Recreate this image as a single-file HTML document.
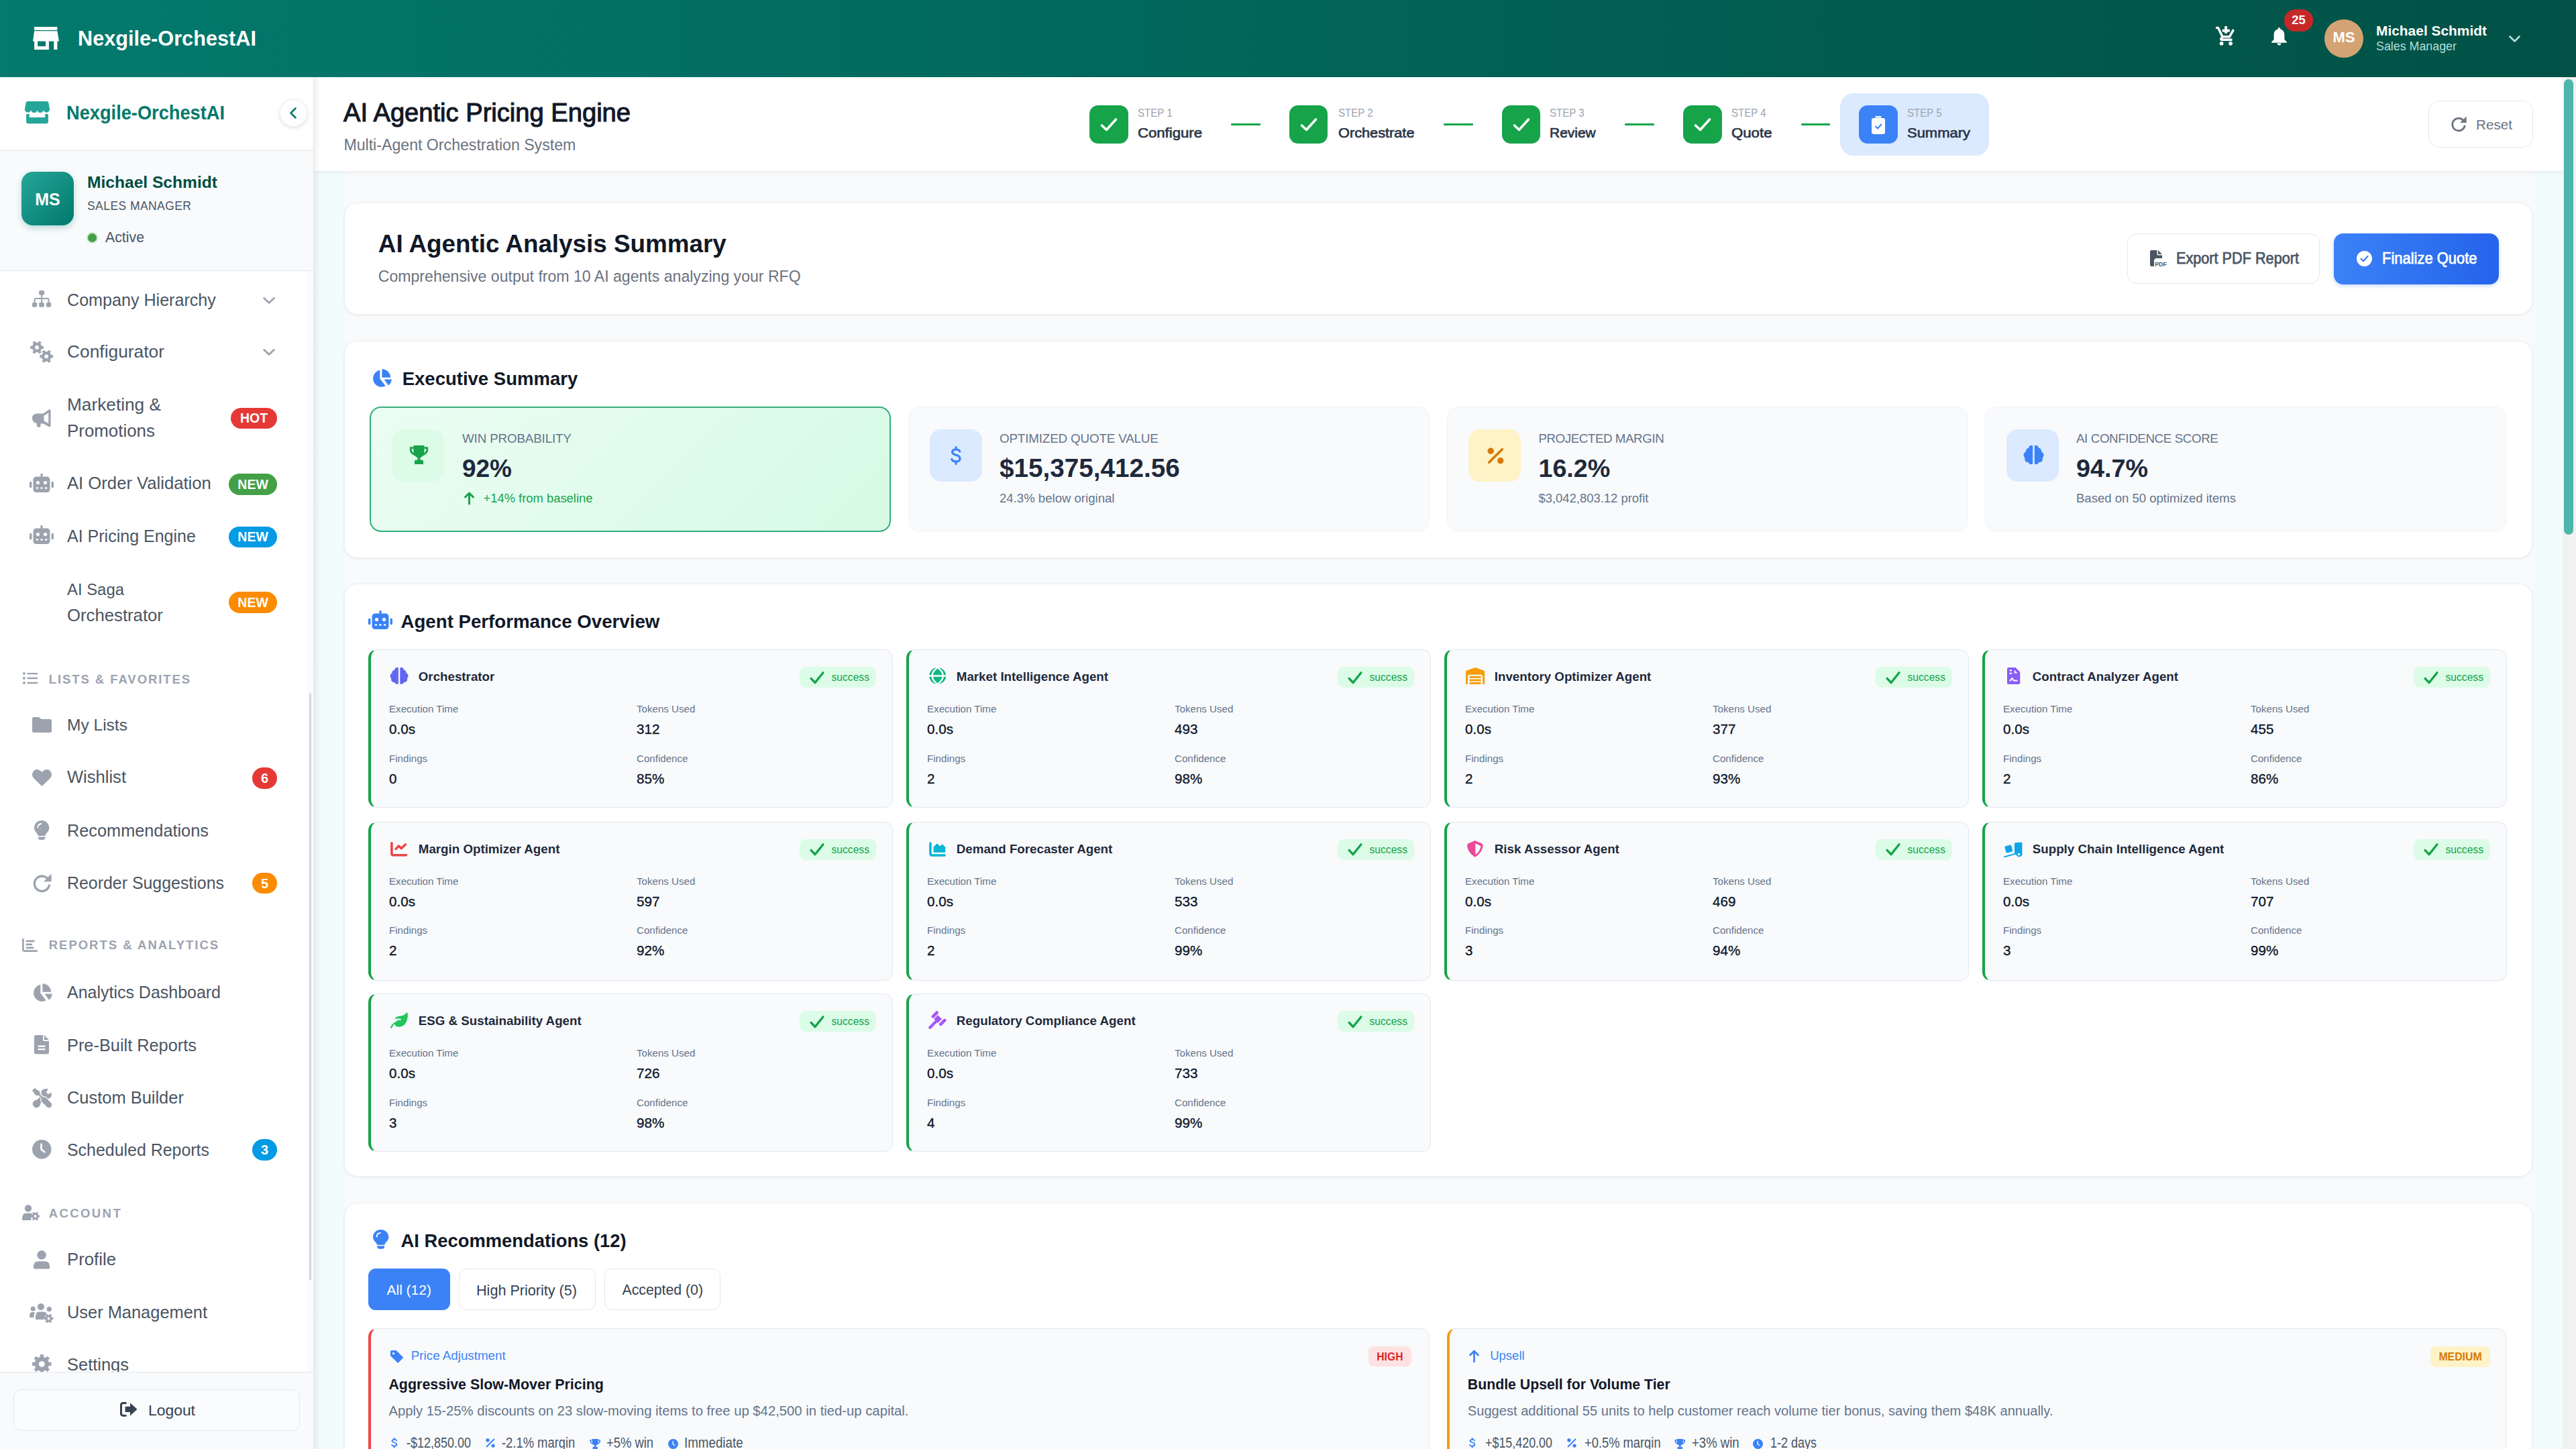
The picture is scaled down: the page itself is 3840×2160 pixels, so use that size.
<!DOCTYPE html><html><head><meta charset="utf-8"><title>AI Agentic Pricing Engine</title><style>
html,body{margin:0;padding:0;}
body{width:3840px;height:2160px;overflow:hidden;position:relative;background:#f3fbfb;font-family:"Liberation Sans",sans-serif;}
.t{position:absolute;white-space:nowrap;}
.b{position:absolute;box-sizing:border-box;}
</style></head><body><div class="b" style="left:0.0px;top:0.0px;width:3840.0px;height:115.0px;background:linear-gradient(90deg,#037a6d 0%,#02695e 40%,#025a4e 75%,#015146 100%);"></div>
<svg class="b" style="left:49.0px;top:40.0px;width:39.0px;height:34.0px;overflow:visible" viewBox="0 0 39 34" preserveAspectRatio="none"><path fill="#ffffff" fill-rule="evenodd" d="M2.1 0H36.4V4.9H2.1Z M2.1 6.2H36.4L39 21.6H0Z M2.1 21.6H23.9V34H2.1Z M7.2 21.6V29H19V21.6Z M31.3 21.6H36.4V34H31.3Z"/></svg>
<div class="t" style="left:116.0px;top:43.3px;font-size:30.68px;line-height:30.68px;color:#ffffff;font-weight:700;">Nexgile-OrchestAI</div>
<svg class="b" style="left:3303.0px;top:39.0px;width:28.0px;height:29.0px;overflow:visible" viewBox="0 0 28 29" preserveAspectRatio="none"><g fill="none" stroke="#ffffff" stroke-width="3.4" stroke-linejoin="round"><path d="M0 2.4H3.6L10 15.8H20.5L26.5 5.2"/><path d="M10.2 15.8L8 18.5Q7 20.3 9.2 20.3H24.5"/></g><rect x="13.2" y="0" width="3.9" height="10.9" fill="#ffffff"/><rect x="9.7" y="4.7" width="11.2" height="3.9" fill="#ffffff"/><circle cx="8.6" cy="25.8" r="2.9" fill="#ffffff"/><circle cx="22.1" cy="25.8" r="2.9" fill="#ffffff"/></svg>
<svg class="b" style="left:3386.0px;top:41.0px;width:23.0px;height:27.0px;overflow:visible" viewBox="0 0 23 27" preserveAspectRatio="none"><circle cx="11.5" cy="1.9" r="1.9" fill="#ffffff"/><path fill="#ffffff" d="M11.5 2.2C6.5 2.2 3.6 6 3.6 11V18L0.3 21.2V22.8H22.7V21.2L19.4 18V11C19.4 6 16.5 2.2 11.5 2.2Z"/><path fill="#ffffff" d="M8.6 23.6H14.4A2.9 2.9 0 0 1 8.6 23.6Z"/></svg>
<div class="b" style="left:3405.0px;top:14.2px;width:43.0px;height:32.4px;background:#c62828;border-radius:16px;"></div>
<div class="t" style="left:3416.2px;top:21.1px;font-size:18.50px;line-height:18.50px;color:#ffffff;font-weight:700;">25</div>
<div class="b" style="left:3465.4px;top:28.7px;width:57.2px;height:57.3px;background:#d4a373;border-radius:50%;"></div>
<div class="t" style="left:3477.5px;top:44.6px;font-size:22.00px;line-height:22.00px;color:#ffffff;font-weight:700;">MS</div>
<div class="t" style="left:3542.0px;top:35.7px;font-size:20.91px;line-height:20.91px;color:#ffffff;font-weight:700;">Michael Schmidt</div>
<div class="t" style="left:3542.0px;top:61.2px;font-size:17.84px;line-height:17.84px;color:#b2dfdb;">Sales Manager</div>
<svg class="b" style="left:3740.0px;top:53.0px;width:17.0px;height:10.0px;overflow:visible" viewBox="0 0 17 10" preserveAspectRatio="none"><path d="M1.5 1.5L8.5 8.5L15.5 1.5" fill="none" stroke="#b2dfdb" stroke-width="2.6" stroke-linecap="round" stroke-linejoin="round"/></svg>
<div class="b" style="left:0.0px;top:115.0px;width:468.0px;height:2045.0px;background:#ffffff;"></div>
<div class="b" style="left:0.0px;top:115.0px;width:467.0px;height:109.5px;background:#ffffff;border-bottom:1.5px solid #e5e7eb;"></div>
<svg class="b" style="left:37.0px;top:151.0px;width:37.0px;height:33.0px;overflow:visible" viewBox="0 0 37 33" preserveAspectRatio="none"><path fill="#26a69a" d="M4.5 0H32.5Q34.8 0 35.4 2.2L37 10.8A4.7 4.7 0 0 1 27.8 13A4.7 4.7 0 0 1 18.5 13A4.7 4.7 0 0 1 9.2 13A4.7 4.7 0 0 1 0 10.8L1.6 2.2Q2.2 0 4.5 0Z"/><path fill="#26a69a" d="M2.1 19H6.8V24.1H30.2V19H34.9V30Q34.9 33.2 31.7 33.2H5.3Q2.1 33.2 2.1 30Z"/></svg>
<div class="t" style="left:99.0px;top:154.4px;font-size:29.07px;line-height:29.07px;color:#00796b;transform:scaleX(0.9369);transform-origin:0 0;font-weight:700;">Nexgile-OrchestAI</div>
<div class="b" style="left:417.0px;top:148.0px;width:41.0px;height:41.0px;background:#ffffff;border-radius:50%;border:1px solid #eef0f2;box-shadow:0 2px 6px rgba(0,0,0,0.12);"></div>
<svg class="b" style="left:432.0px;top:160.0px;width:10.0px;height:17.0px;overflow:visible" viewBox="0 0 10 17" preserveAspectRatio="none"><path d="M8.5 1.5L1.5 8.5L8.5 15.5" fill="none" stroke="#00796b" stroke-width="2.6" stroke-linecap="round" stroke-linejoin="round"/></svg>
<div class="b" style="left:0.0px;top:224.5px;width:467.0px;height:179.0px;background:#f8fafc;border-bottom:1.5px solid #e5e7eb;"></div>
<div class="b" style="left:32.0px;top:256.0px;width:78.0px;height:80.0px;background:linear-gradient(135deg,#26a69a,#00796b);border-radius:17px;box-shadow:0 4px 10px rgba(0,121,107,0.25);"></div>
<div class="t" style="left:52.2px;top:285.3px;font-size:25.00px;line-height:25.00px;color:#ffffff;font-weight:700;">MS</div>
<div class="t" style="left:130.0px;top:259.7px;font-size:24.59px;line-height:24.59px;color:#004d40;font-weight:700;">Michael Schmidt</div>
<div class="t" style="left:130.0px;top:299.2px;font-size:17.50px;line-height:17.50px;color:#4b5563;letter-spacing:0.436px;">SALES MANAGER</div>
<div class="b" style="left:128.5px;top:345.5px;width:17.0px;height:17.0px;background:#43a047;border-radius:50%;border:2.5px solid #c8e6c9;"></div>
<div class="t" style="left:157.0px;top:344.0px;font-size:21.30px;line-height:21.30px;color:#4b5563;">Active</div>
<div class="t" style="left:100.0px;top:434.7px;font-size:25.12px;line-height:25.12px;color:#4b5563;">Company Hierarchy</div>
<svg class="b" style="left:48.0px;top:433.0px;width:28.0px;height:25.0px;overflow:visible" viewBox="0 0 28 25" preserveAspectRatio="none"><rect x="10.2" y="0" width="7.8" height="6.7" rx="1.6" fill="#9ca3af"/><rect x="13.1" y="6" width="2" height="12" fill="#9ca3af"/><path d="M3.6 18.5V13.5Q3.6 11.9 5.2 11.9H23Q24.6 11.9 24.6 13.5V18.5" fill="none" stroke="#9ca3af" stroke-width="2"/><rect x="0" y="17.9" width="7.2" height="6.8" rx="1.6" fill="#9ca3af"/><rect x="10.1" y="17.9" width="7.7" height="6.8" rx="1.6" fill="#9ca3af"/><rect x="21" y="17.9" width="7.2" height="6.8" rx="1.6" fill="#9ca3af"/></svg>
<svg class="b" style="left:392.0px;top:442.5px;width:18.0px;height:10.0px;overflow:visible" viewBox="0 0 17 10" preserveAspectRatio="none"><path d="M1.5 1.5L8.5 8.5L15.5 1.5" fill="none" stroke="#9ca3af" stroke-width="2.6" stroke-linecap="round" stroke-linejoin="round"/></svg>
<div class="t" style="left:100.0px;top:510.7px;font-size:26.35px;line-height:26.35px;color:#4b5563;">Configurator</div>
<svg class="b" style="left:45.0px;top:508.0px;width:34.0px;height:33.0px;overflow:visible" viewBox="0 0 34 33" preserveAspectRatio="none"><polygon points="16.16,6.61 16.83,8.39 19.55,8.22 19.55,11.58 16.83,11.41 16.16,13.19 15.98,13.51 14.77,14.98 16.28,17.25 13.37,18.93 12.16,16.48 10.28,16.80 9.92,16.80 8.04,16.48 6.83,18.93 3.92,17.25 5.43,14.98 4.22,13.51 4.04,13.19 3.37,11.41 0.65,11.58 0.65,8.22 3.37,8.39 4.04,6.61 4.22,6.29 5.43,4.82 3.92,2.55 6.83,0.87 8.04,3.32 9.92,3.00 10.28,3.00 12.16,3.32 13.37,0.87 16.28,2.55 14.77,4.82 15.98,6.29" fill="#9ca3af" stroke="#9ca3af" stroke-width="1" stroke-linejoin="round"/><circle cx="10.1" cy="9.9" r="6.35" fill="#9ca3af"/><circle cx="10.1" cy="9.9" r="2.9" fill="#ffffff"/><polygon points="30.26,20.01 30.93,21.79 33.65,21.62 33.65,24.98 30.93,24.81 30.26,26.59 30.08,26.91 28.87,28.38 30.38,30.65 27.47,32.33 26.26,29.88 24.38,30.20 24.02,30.20 22.14,29.88 20.93,32.33 18.02,30.65 19.53,28.38 18.32,26.91 18.14,26.59 17.47,24.81 14.75,24.98 14.75,21.62 17.47,21.79 18.14,20.01 18.32,19.69 19.53,18.22 18.02,15.95 20.93,14.27 22.14,16.72 24.02,16.40 24.38,16.40 26.26,16.72 27.47,14.27 30.38,15.95 28.87,18.22 30.08,19.69" fill="#9ca3af" stroke="#9ca3af" stroke-width="1" stroke-linejoin="round"/><circle cx="24.2" cy="23.3" r="6.35" fill="#9ca3af"/><circle cx="24.2" cy="23.3" r="2.9" fill="#ffffff"/></svg>
<svg class="b" style="left:392.0px;top:519.5px;width:18.0px;height:10.0px;overflow:visible" viewBox="0 0 17 10" preserveAspectRatio="none"><path d="M1.5 1.5L8.5 8.5L15.5 1.5" fill="none" stroke="#9ca3af" stroke-width="2.6" stroke-linecap="round" stroke-linejoin="round"/></svg>
<div class="t" style="left:100.0px;top:589.8px;font-size:26.24px;line-height:26.24px;color:#4b5563;">Marketing &amp;</div>
<div class="t" style="left:100.0px;top:629.5px;font-size:25.90px;line-height:25.90px;color:#4b5563;">Promotions</div>
<svg class="b" style="left:47.6px;top:610.2px;width:28.0px;height:27.0px;overflow:visible" viewBox="0 0 28 27" preserveAspectRatio="none"><path fill="#9ca3af" d="M25.5 0.2Q27.6 0.3 27.6 2.3V24.4Q27.6 26.5 25.5 26.6L16.5 21.5H12.5V25Q12.5 26.7 10.8 26.7H8.6Q6.9 26.7 6.9 25V21.1Q0 19.8 0 13.4Q0 6.6 7.5 6.4H16.5ZM24.3 5.4L17.4 9.7V17.3L24.3 21.3Z"/></svg>
<div class="b" style="left:344.0px;top:608.0px;width:69.0px;height:31.0px;background:#e53935;border-radius:15.5px;"></div>
<div class="t" style="left:357.9px;top:614.0px;font-size:19.50px;line-height:19.50px;color:#ffffff;font-weight:700;">HOT</div>
<div class="t" style="left:100.0px;top:708.3px;font-size:25.67px;line-height:25.67px;color:#4b5563;">AI Order Validation</div>
<svg class="b" style="left:44.1px;top:705.9px;width:36.0px;height:28.0px;overflow:visible" viewBox="0 0 36 28" preserveAspectRatio="none"><rect x="16.4" y="0" width="3.2" height="5" rx="1" fill="#9ca3af"/><rect x="5.5" y="4.6" width="25" height="23.4" rx="4.5" fill="#9ca3af"/><rect x="0" y="11.8" width="3.4" height="9.4" rx="1.5" fill="#9ca3af"/><rect x="32.6" y="11.8" width="3.4" height="9.4" rx="1.5" fill="#9ca3af"/><circle cx="12.5" cy="13.6" r="2.6" fill="#ffffff"/><circle cx="23.5" cy="13.6" r="2.6" fill="#ffffff"/><rect x="9.6" y="20.3" width="3.6" height="2.4" rx="1.1" fill="#ffffff"/><rect x="16.2" y="20.3" width="3.6" height="2.4" rx="1.1" fill="#ffffff"/><rect x="22.8" y="20.3" width="3.6" height="2.4" rx="1.1" fill="#ffffff"/></svg>
<div class="b" style="left:341.0px;top:706.0px;width:72.0px;height:32.0px;background:#43a047;border-radius:16.0px;"></div>
<div class="t" style="left:354.3px;top:712.5px;font-size:19.50px;line-height:19.50px;color:#ffffff;font-weight:700;">NEW</div>
<div class="t" style="left:100.0px;top:786.8px;font-size:25.03px;line-height:25.03px;color:#4b5563;">AI Pricing Engine</div>
<svg class="b" style="left:44.1px;top:783.4px;width:36.0px;height:28.0px;overflow:visible" viewBox="0 0 36 28" preserveAspectRatio="none"><rect x="16.4" y="0" width="3.2" height="5" rx="1" fill="#9ca3af"/><rect x="5.5" y="4.6" width="25" height="23.4" rx="4.5" fill="#9ca3af"/><rect x="0" y="11.8" width="3.4" height="9.4" rx="1.5" fill="#9ca3af"/><rect x="32.6" y="11.8" width="3.4" height="9.4" rx="1.5" fill="#9ca3af"/><circle cx="12.5" cy="13.6" r="2.6" fill="#ffffff"/><circle cx="23.5" cy="13.6" r="2.6" fill="#ffffff"/><rect x="9.6" y="20.3" width="3.6" height="2.4" rx="1.1" fill="#ffffff"/><rect x="16.2" y="20.3" width="3.6" height="2.4" rx="1.1" fill="#ffffff"/><rect x="22.8" y="20.3" width="3.6" height="2.4" rx="1.1" fill="#ffffff"/></svg>
<div class="b" style="left:341.0px;top:784.5px;width:72.0px;height:31.0px;background:#039be5;border-radius:15.5px;"></div>
<div class="t" style="left:354.3px;top:790.5px;font-size:19.50px;line-height:19.50px;color:#ffffff;font-weight:700;">NEW</div>
<div class="t" style="left:100.0px;top:866.8px;font-size:23.89px;line-height:23.89px;color:#4b5563;">AI Saga</div>
<div class="t" style="left:100.0px;top:904.8px;font-size:25.73px;line-height:25.73px;color:#4b5563;">Orchestrator</div>
<div class="b" style="left:341.0px;top:882.0px;width:72.0px;height:32.0px;background:#fb8c00;border-radius:16.0px;"></div>
<div class="t" style="left:354.3px;top:888.5px;font-size:19.50px;line-height:19.50px;color:#ffffff;font-weight:700;">NEW</div>
<div class="t" style="left:72.7px;top:1003.9px;font-size:18.50px;line-height:18.50px;color:#9ca3af;font-weight:700;letter-spacing:1.935px;">LISTS & FAVORITES</div>
<svg class="b" style="left:33.8px;top:1002.3px;width:22.5px;height:18.0px;overflow:visible" viewBox="0 0 22.5 18" preserveAspectRatio="none"><circle cx="1.9" cy="2" r="1.9" fill="#9ca3af"/><circle cx="1.9" cy="9" r="1.9" fill="#9ca3af"/><circle cx="1.9" cy="16" r="1.9" fill="#9ca3af"/><rect x="6.3" y="0.9" width="16.2" height="2.4" rx="1.1" fill="#9ca3af"/><rect x="6.3" y="7.8" width="16.2" height="2.4" rx="1.1" fill="#9ca3af"/><rect x="6.3" y="14.8" width="16.2" height="2.4" rx="1.1" fill="#9ca3af"/></svg>
<div class="t" style="left:100.0px;top:1069.2px;font-size:24.54px;line-height:24.54px;color:#4b5563;">My Lists</div>
<svg class="b" style="left:47.8px;top:1068.7px;width:29.0px;height:23.0px;overflow:visible" viewBox="0 0 29 23" preserveAspectRatio="none"><path fill="#9ca3af" d="M2.5 0H10.5L13.5 3H26.5Q29 3 29 5.5V20.5Q29 23 26.5 23H2.5Q0 23 0 20.5V2.5Q0 0 2.5 0Z"/></svg>
<div class="t" style="left:100.0px;top:1146.1px;font-size:25.55px;line-height:25.55px;color:#4b5563;">Wishlist</div>
<svg class="b" style="left:47.8px;top:1146.7px;width:29.0px;height:25.0px;overflow:visible" viewBox="0 0 29 25" preserveAspectRatio="none"><path fill="#9ca3af" d="M14.5 25L2.6 13.6Q-1.8 8.8 1.3 3.4Q4.9 -1.7 10.6 0.9Q13 2 14.5 4Q16 2 18.4 0.9Q24.1 -1.7 27.7 3.4Q30.8 8.8 26.4 13.6Z"/></svg>
<div class="b" style="left:376.0px;top:1144.0px;width:37.0px;height:32.0px;background:#e53935;border-radius:16.0px;"></div>
<div class="t" style="left:388.9px;top:1150.3px;font-size:20.00px;line-height:20.00px;color:#ffffff;font-weight:700;">6</div>
<div class="t" style="left:100.0px;top:1225.6px;font-size:25.31px;line-height:25.31px;color:#4b5563;">Recommendations</div>
<svg class="b" style="left:50.9px;top:1223.3px;width:22.3px;height:29.0px;overflow:visible" viewBox="0 0 22.3 29" preserveAspectRatio="none"><path fill="#9ca3af" d="M11.15 0C17.3 0 22.3 4.9 22.3 11C22.3 15.5 19.6 17.3 17.6 20.2Q16.6 21.7 16.4 23H5.9Q5.7 21.7 4.7 20.2C2.7 17.3 0 15.5 0 11C0 4.9 5 0 11.15 0Z"/><path fill="#9ca3af" d="M5.9 24.6H16.4V25.3Q16.4 29 12.7 29H9.6Q5.9 29 5.9 25.3Z"/><path d="M5.3 10.6Q5.5 5.5 10.4 5" fill="none" stroke="#ffffff" stroke-width="1.8" stroke-linecap="round"/></svg>
<div class="t" style="left:100.0px;top:1303.9px;font-size:24.91px;line-height:24.91px;color:#4b5563;">Reorder Suggestions</div>
<svg class="b" style="left:47.8px;top:1301.8px;width:29.0px;height:29.0px;overflow:visible" viewBox="0 0 29 29" preserveAspectRatio="none"><path d="M24.2 9.5A11.2 11.2 0 1 0 25.4 18" fill="none" stroke="#9ca3af" stroke-width="3.4" stroke-linecap="round"/><path fill="#9ca3af" d="M28.6 0.6V12.2H17Z"/></svg>
<div class="b" style="left:376.0px;top:1301.0px;width:37.0px;height:30.5px;background:#fb8c00;border-radius:15.2px;"></div>
<div class="t" style="left:388.9px;top:1306.5px;font-size:20.00px;line-height:20.00px;color:#ffffff;font-weight:700;">5</div>
<div class="t" style="left:72.7px;top:1400.0px;font-size:18.50px;line-height:18.50px;color:#9ca3af;font-weight:700;letter-spacing:1.997px;">REPORTS & ANALYTICS</div>
<svg class="b" style="left:33.2px;top:1400.4px;width:23.0px;height:19.0px;overflow:visible" viewBox="0 0 23 19" preserveAspectRatio="none"><path d="M1.4 0V15.6Q1.4 17.6 3.4 17.6H22" fill="none" stroke="#9ca3af" stroke-width="2.6" stroke-linecap="round"/><rect x="5.6" y="1.6" width="13" height="2.6" rx="1.2" fill="#9ca3af"/><rect x="5.6" y="6.6" width="9.6" height="2.6" rx="1.2" fill="#9ca3af"/><rect x="5.6" y="11.6" width="12" height="2.6" rx="1.2" fill="#9ca3af"/></svg>
<div class="t" style="left:100.0px;top:1466.9px;font-size:24.97px;line-height:24.97px;color:#4b5563;">Analytics Dashboard</div>
<svg class="b" style="left:48.0px;top:1465.6px;width:30.0px;height:28.0px;overflow:visible" viewBox="0 0 30 28" preserveAspectRatio="none"><path fill="#9ca3af" d="M12.3 1.8V14.6L20.6 25.3A12.6 12.6 0 1 1 12.3 1.8Z"/><path fill="#9ca3af" d="M15.4 0.2A12.8 12.8 0 0 1 28.2 12.8H16.6Q15.4 12.8 15.4 11.6Z"/><path fill="#9ca3af" d="M18.6 15.6H29.8A12.6 12.6 0 0 1 25 24.6Z"/></svg>
<div class="t" style="left:100.0px;top:1545.5px;font-size:25.35px;line-height:25.35px;color:#4b5563;">Pre-Built Reports</div>
<svg class="b" style="left:51.2px;top:1543.4px;width:22.0px;height:28.3px;overflow:visible" viewBox="0 0 22 28.3" preserveAspectRatio="none"><path fill="#9ca3af" d="M2.5 0H13V7.2Q13 9 14.8 9H22V25.8Q22 28.3 19.5 28.3H2.5Q0 28.3 0 25.8V2.5Q0 0 2.5 0ZM14.8 0L22 7.2H14.8Z"/><rect x="5.5" y="15.5" width="11" height="2.3" fill="#ffffff"/><rect x="5.5" y="20" width="11" height="2.3" fill="#ffffff"/></svg>
<div class="t" style="left:100.0px;top:1623.7px;font-size:25.45px;line-height:25.45px;color:#4b5563;">Custom Builder</div>
<svg class="b" style="left:47.5px;top:1622.0px;width:30.0px;height:29.0px;overflow:visible" viewBox="0 0 30 29" preserveAspectRatio="none"><path fill="#9ca3af" d="M14.3 3.3Q17.5 0.4 23.9 1.1L20.8 6.4L23.9 9.2L28.3 6.4Q30.2 11.5 26.4 14.8Q23.5 17.2 19.5 16.2L12.6 22.6Q12.2 26.5 9.5 28.3Q6.5 30 3.5 28.4Q0.6 26.6 0.6 23.5Q0.8 20.6 3.6 18.6Q5.5 17.4 7.4 17.6L13.6 11Q13 6.5 14.3 3.3Z"/><g stroke="#ffffff" stroke-width="2.2" stroke-linejoin="round"><path fill="#9ca3af" d="M0 3.3L4 0L11.6 5.8L11.8 7.6L9 10.9L5 10.7Z"/><path d="M10 9.4L16.8 16.2" stroke-width="5.2" stroke-linecap="round"/><path d="M17.6 17.6L25 25" stroke-width="11" stroke-linecap="round"/></g><path fill="#9ca3af" d="M0 3.3L4 0L11.6 5.8L11.8 7.6L9 10.9L5 10.7Z"/><path d="M10 9.4L16.8 16.2" stroke="#9ca3af" stroke-width="2.8"/><path d="M17.6 17.6L25 25" stroke="#9ca3af" stroke-width="8.6" stroke-linecap="round"/></svg>
<div class="t" style="left:100.0px;top:1702.4px;font-size:24.93px;line-height:24.93px;color:#4b5563;">Scheduled Reports</div>
<svg class="b" style="left:47.9px;top:1699.3px;width:28.5px;height:28.5px;overflow:visible" viewBox="0 0 28.5 28.5" preserveAspectRatio="none"><circle cx="14.25" cy="14.25" r="14.25" fill="#9ca3af"/><path d="M13.6 6.5V14.6L18.5 18.2" fill="none" stroke="#ffffff" stroke-width="2.6" stroke-linecap="round"/></svg>
<div class="b" style="left:376.0px;top:1698.0px;width:37.0px;height:32.0px;background:#039be5;border-radius:16.0px;"></div>
<div class="t" style="left:388.9px;top:1704.3px;font-size:20.00px;line-height:20.00px;color:#ffffff;font-weight:700;">3</div>
<div class="t" style="left:72.7px;top:1799.8px;font-size:18.50px;line-height:18.50px;color:#9ca3af;font-weight:700;letter-spacing:2.419px;">ACCOUNT</div>
<svg class="b" style="left:33.2px;top:1796.4px;width:26.0px;height:23.0px;overflow:visible" viewBox="0 0 26 23" preserveAspectRatio="none"><circle cx="9" cy="5.2" r="5.2" fill="#9ca3af"/><path fill="#9ca3af" d="M5.5 12.5H12.5Q14 12.5 15 13L12.8 23H1.6Q0 23 0 21.4Q0 12.5 5.5 12.5Z"/><polygon points="23.64,14.81 24.09,16.00 25.70,15.91 25.70,18.09 24.09,18.00 23.64,19.19 23.52,19.40 22.71,20.39 23.59,21.74 21.71,22.83 20.98,21.39 19.72,21.60 19.48,21.60 18.22,21.39 17.49,22.83 15.61,21.74 16.49,20.39 15.68,19.40 15.56,19.19 15.11,18.00 13.50,18.09 13.50,15.91 15.11,16.00 15.56,14.81 15.68,14.60 16.49,13.61 15.61,12.26 17.49,11.17 18.22,12.61 19.48,12.40 19.72,12.40 20.98,12.61 21.71,11.17 23.59,12.26 22.71,13.61 23.52,14.60" fill="#9ca3af" stroke="#9ca3af" stroke-width="1" stroke-linejoin="round"/><circle cx="19.6" cy="17" r="4.23" fill="#9ca3af"/><circle cx="19.6" cy="17" r="1.9" fill="#ffffff"/></svg>
<div class="t" style="left:100.0px;top:1865.2px;font-size:25.76px;line-height:25.76px;color:#4b5563;">Profile</div>
<svg class="b" style="left:50.3px;top:1864.0px;width:24.2px;height:27.6px;overflow:visible" viewBox="0 0 24.2 27.6" preserveAspectRatio="none"><circle cx="12.1" cy="6.8" r="6.8" fill="#9ca3af"/><path fill="#9ca3af" d="M7.5 16.2H16.7Q24.2 16.2 24.2 23.7V25.8Q24.2 27.6 22.4 27.6H1.8Q0 27.6 0 25.8V23.7Q0 16.2 7.5 16.2Z"/></svg>
<div class="t" style="left:100.0px;top:1944.2px;font-size:25.41px;line-height:25.41px;color:#4b5563;">User Management</div>
<svg class="b" style="left:43.9px;top:1943.2px;width:36.0px;height:29.0px;overflow:visible" viewBox="0 0 36 29" preserveAspectRatio="none"><circle cx="17" cy="5" r="5" fill="#9ca3af"/><circle cx="5.2" cy="8" r="3.6" fill="#9ca3af"/><circle cx="29.3" cy="8.4" r="3.6" fill="#9ca3af"/><path fill="#9ca3af" d="M13.5 12.5H21Q24 12.5 25.5 14.5L21 24H9V20Q9 12.5 13.5 12.5Z"/><path fill="#9ca3af" d="M3.6 13H8Q6.5 15.5 6.6 20V21H1.4Q0 21 0 19.6Q0 13 3.6 13Z"/><polygon points="32.72,20.11 33.18,21.35 35.00,21.24 35.00,23.56 33.18,23.45 32.72,24.69 32.59,24.91 31.75,25.93 32.75,27.45 30.75,28.61 29.94,26.98 28.63,27.20 28.37,27.20 27.06,26.98 26.25,28.61 24.25,27.45 25.25,25.93 24.41,24.91 24.28,24.69 23.82,23.45 22.00,23.56 22.00,21.24 23.82,21.35 24.28,20.11 24.41,19.89 25.25,18.87 24.25,17.35 26.25,16.19 27.06,17.82 28.37,17.60 28.63,17.60 29.94,17.82 30.75,16.19 32.75,17.35 31.75,18.87 32.59,19.89" fill="#9ca3af" stroke="#9ca3af" stroke-width="1" stroke-linejoin="round"/><circle cx="28.5" cy="22.4" r="4.42" fill="#9ca3af"/><circle cx="28.5" cy="22.4" r="2" fill="#ffffff"/></svg>
<div class="t" style="left:100.0px;top:2022.4px;font-size:25.46px;line-height:25.46px;color:#4b5563;">Settings</div>
<svg class="b" style="left:48.0px;top:2018.5px;width:28.6px;height:28.6px;overflow:visible" viewBox="0 0 28.6 28.6" preserveAspectRatio="none"><polygon points="23.98,10.51 24.50,12.27 28.13,12.11 28.13,16.49 24.50,16.33 23.98,18.09 23.83,18.47 22.95,20.08 25.63,22.53 22.53,25.63 20.08,22.95 18.47,23.83 18.09,23.98 16.33,24.50 16.49,28.13 12.11,28.13 12.27,24.50 10.51,23.98 10.13,23.83 8.52,22.95 6.07,25.63 2.97,22.53 5.65,20.08 4.77,18.47 4.62,18.09 4.10,16.33 0.47,16.49 0.47,12.11 4.10,12.27 4.62,10.51 4.77,10.13 5.65,8.52 2.97,6.07 6.07,2.97 8.52,5.65 10.13,4.77 10.51,4.62 12.27,4.10 12.11,0.47 16.49,0.47 16.33,4.10 18.09,4.62 18.47,4.77 20.08,5.65 22.53,2.97 25.63,6.07 22.95,8.52 23.83,10.13" fill="#9ca3af" stroke="#9ca3af" stroke-width="1" stroke-linejoin="round"/><circle cx="14.3" cy="14.3" r="9.57" fill="#9ca3af"/><circle cx="14.3" cy="14.3" r="4.4" fill="#ffffff"/></svg>
<div class="b" style="left:458.0px;top:404.0px;width:9.0px;height:1640.5px;background:#fafbfc;"></div>
<div class="b" style="left:460.8px;top:1033.0px;width:3.4px;height:875.0px;background:#d1d5db;border-radius:2px;"></div>
<div class="b" style="left:0.0px;top:2044.5px;width:467.0px;height:115.5px;background:#f8fafc;border-top:1.5px solid #e5e7eb;"></div>
<div class="b" style="left:20.0px;top:2071.0px;width:427.0px;height:62.0px;background:#fbfcfd;border:1.5px solid #e5e7eb;border-radius:12px;"></div>
<svg class="b" style="left:178.7px;top:2090.0px;width:25.5px;height:21.7px;overflow:visible" viewBox="0 0 25.5 21.7" preserveAspectRatio="none"><path d="M8.3 1.5H4.6Q1.5 1.5 1.5 4.6V17.1Q1.5 20.2 4.6 20.2H8.3" fill="none" stroke="#374151" stroke-width="3" stroke-linecap="round"/><path fill="#374151" d="M15 1.2L25.5 10.85L15 20.5V15H7.6V6.7H15Z"/></svg>
<div class="t" style="left:221.0px;top:2090.6px;font-size:22.89px;line-height:22.89px;color:#374151;">Logout</div>
<div class="b" style="left:468.0px;top:115.0px;width:3351.5px;height:2045.0px;background:#f2fcfd;"></div>
<div class="b" style="left:512.5px;top:256.0px;width:3263.5px;height:1904.0px;background:#f8fafc;"></div>
<div class="b" style="left:468.0px;top:115.0px;width:3351.5px;height:141.0px;background:#ffffff;border-bottom:1px solid #e9ecef;box-shadow:0 2px 6px rgba(0,0,0,0.05);"></div>
<div class="t" style="left:512.4px;top:149.0px;font-size:38.66px;line-height:38.66px;color:#111827;transform:scaleX(0.9860);transform-origin:0 0;-webkit-text-stroke-width:1.1px;">AI Agentic Pricing Engine</div>
<div class="t" style="left:512.4px;top:204.7px;font-size:23.15px;line-height:23.15px;color:#6b7280;">Multi-Agent Orchestration System</div>
<div class="b" style="left:2742.8px;top:139.0px;width:222.2px;height:92.8px;background:#dbeafe;border-radius:20px;"></div>
<div class="b" style="left:1624.0px;top:156.6px;width:57.6px;height:57.4px;background:#16a34a;border-radius:13px;"></div>
<svg class="b" style="left:1640.0px;top:175.5px;width:26.0px;height:20.0px;overflow:visible" viewBox="0 0 26 20" preserveAspectRatio="none"><path d="M2.5 11L9.5 17.5L23.5 2" fill="none" stroke="#ffffff" stroke-width="3.6" stroke-linecap="round" stroke-linejoin="round"/></svg>
<div class="t" style="left:1696.4px;top:159.8px;font-size:17.01px;line-height:17.01px;color:#9ca3af;transform:scaleX(0.8854);transform-origin:0 0;">STEP 1</div>
<div class="t" style="left:1696.4px;top:187.8px;font-size:20.35px;line-height:20.35px;color:#2d3748;transform:scaleX(1.0884);transform-origin:0 0;-webkit-text-stroke-width:0.7px;">Configure</div>
<div class="b" style="left:1921.7px;top:156.6px;width:57.6px;height:57.4px;background:#16a34a;border-radius:13px;"></div>
<svg class="b" style="left:1937.7px;top:175.5px;width:26.0px;height:20.0px;overflow:visible" viewBox="0 0 26 20" preserveAspectRatio="none"><path d="M2.5 11L9.5 17.5L23.5 2" fill="none" stroke="#ffffff" stroke-width="3.6" stroke-linecap="round" stroke-linejoin="round"/></svg>
<div class="t" style="left:1994.5px;top:159.8px;font-size:17.01px;line-height:17.01px;color:#9ca3af;transform:scaleX(0.8854);transform-origin:0 0;">STEP 2</div>
<div class="t" style="left:1994.5px;top:187.8px;font-size:20.35px;line-height:20.35px;color:#2d3748;transform:scaleX(1.0678);transform-origin:0 0;-webkit-text-stroke-width:0.7px;">Orchestrate</div>
<div class="b" style="left:2238.6px;top:156.6px;width:57.6px;height:57.4px;background:#16a34a;border-radius:13px;"></div>
<svg class="b" style="left:2254.6px;top:175.5px;width:26.0px;height:20.0px;overflow:visible" viewBox="0 0 26 20" preserveAspectRatio="none"><path d="M2.5 11L9.5 17.5L23.5 2" fill="none" stroke="#ffffff" stroke-width="3.6" stroke-linecap="round" stroke-linejoin="round"/></svg>
<div class="t" style="left:2310.0px;top:159.8px;font-size:17.01px;line-height:17.01px;color:#9ca3af;transform:scaleX(0.8854);transform-origin:0 0;">STEP 3</div>
<div class="t" style="left:2310.0px;top:187.8px;font-size:20.35px;line-height:20.35px;color:#2d3748;transform:scaleX(1.0302);transform-origin:0 0;-webkit-text-stroke-width:0.7px;">Review</div>
<div class="b" style="left:2509.0px;top:156.6px;width:57.6px;height:57.4px;background:#16a34a;border-radius:13px;"></div>
<svg class="b" style="left:2525.0px;top:175.5px;width:26.0px;height:20.0px;overflow:visible" viewBox="0 0 26 20" preserveAspectRatio="none"><path d="M2.5 11L9.5 17.5L23.5 2" fill="none" stroke="#ffffff" stroke-width="3.6" stroke-linecap="round" stroke-linejoin="round"/></svg>
<div class="t" style="left:2580.5px;top:159.8px;font-size:17.01px;line-height:17.01px;color:#9ca3af;transform:scaleX(0.8854);transform-origin:0 0;">STEP 4</div>
<div class="t" style="left:2580.5px;top:187.8px;font-size:20.35px;line-height:20.35px;color:#2d3748;transform:scaleX(1.0916);transform-origin:0 0;-webkit-text-stroke-width:0.7px;">Quote</div>
<div class="b" style="left:2771.0px;top:156.6px;width:57.6px;height:57.4px;background:#3b82f6;border-radius:13px;"></div>
<svg class="b" style="left:2790.0px;top:173.0px;width:20.0px;height:27.0px;overflow:visible" viewBox="0 0 20 27" preserveAspectRatio="none"><rect x="0" y="3" width="20" height="24" rx="3" fill="#ffffff"/><rect x="5.5" y="0" width="9" height="2.4" rx="1" fill="#ffffff"/><path d="M6 15.5L9 18.5L14.5 12.5" fill="none" stroke="#3b82f6" stroke-width="2" stroke-linecap="round" stroke-linejoin="round"/></svg>
<div class="t" style="left:2843.0px;top:159.8px;font-size:17.01px;line-height:17.01px;color:#9ca3af;transform:scaleX(0.8854);transform-origin:0 0;">STEP 5</div>
<div class="t" style="left:2843.0px;top:187.8px;font-size:20.35px;line-height:20.35px;color:#2d3748;transform:scaleX(1.0799);transform-origin:0 0;-webkit-text-stroke-width:0.7px;">Summary</div>
<div class="b" style="left:1835.0px;top:183.8px;width:44.0px;height:3.4px;background:#16a34a;border-radius:1px;"></div>
<div class="b" style="left:2152.0px;top:183.8px;width:43.5px;height:3.4px;background:#16a34a;border-radius:1px;"></div>
<div class="b" style="left:2422.4px;top:183.8px;width:43.3px;height:3.4px;background:#16a34a;border-radius:1px;"></div>
<div class="b" style="left:2685.0px;top:183.8px;width:43.0px;height:3.4px;background:#16a34a;border-radius:1px;"></div>
<div class="b" style="left:3620.0px;top:150.0px;width:155.5px;height:69.6px;background:#ffffff;border:1.5px solid #e5e7eb;border-radius:16px;"></div>
<svg class="b" style="left:3653.0px;top:172.5px;width:24.0px;height:24.0px;overflow:visible" viewBox="0 0 29 29" preserveAspectRatio="none"><path d="M24.2 9.5A11.2 11.2 0 1 0 25.4 18" fill="none" stroke="#6b7280" stroke-width="3.4" stroke-linecap="round"/><path fill="#6b7280" d="M28.6 0.6V12.2H17Z"/></svg>
<div class="t" style="left:3691.0px;top:175.5px;font-size:20.67px;line-height:20.67px;color:#6b7280;">Reset</div>
<div class="b" style="left:467.0px;top:115.0px;width:1.0px;height:2045.0px;background:#e9ecef;"></div>
<div class="b" style="left:468.0px;top:115.0px;width:10.0px;height:2045.0px;background:linear-gradient(90deg,rgba(0,0,0,0.06),rgba(0,0,0,0));"></div>
<div class="b" style="left:3819.5px;top:115.0px;width:20.5px;height:2045.0px;background:#f1f1f1;"></div>
<div class="b" style="left:3822.4px;top:118.0px;width:14.1px;height:679.0px;background:#4db6ac;border-radius:7px;"></div>
<div class="b" style="left:513.0px;top:301.5px;width:3262.0px;height:167.2px;background:#ffffff;border:1.2px solid #edf0f2;border-radius:20px;box-shadow:0 1px 4px rgba(0,0,0,0.07);"></div>
<div class="t" style="left:563.8px;top:345.6px;font-size:36.82px;line-height:36.82px;color:#111827;font-weight:700;">AI Agentic Analysis Summary</div>
<div class="t" style="left:563.8px;top:401.2px;font-size:23.09px;line-height:23.09px;color:#6b7280;">Comprehensive output from 10 AI agents analyzing your RFQ</div>
<div class="b" style="left:3170.7px;top:347.7px;width:287.8px;height:75.3px;background:#ffffff;border:1.5px solid #e5e7eb;border-radius:14px;"></div>
<svg class="b" style="left:3205.0px;top:373.0px;width:25.0px;height:24.0px;overflow:visible" viewBox="0 0 25 24" preserveAspectRatio="none"><path fill="#4b5563" d="M2.2 0H10.5V6Q10.5 7.6 12.1 7.6H18V12H10Q6 12 6 16V24H2.2Q0 24 0 21.8V2.2Q0 0 2.2 0ZM12 0L18 6H12Z"/><text x="7.2" y="23.6" font-family="Liberation Sans" font-weight="700" font-size="9.2" fill="#4b5563" textLength="17.8" lengthAdjust="spacingAndGlyphs">PDF</text></svg>
<div class="t" style="left:3244.0px;top:373.5px;font-size:23.26px;line-height:23.26px;color:#4b5563;transform:scaleX(0.9317);transform-origin:0 0;-webkit-text-stroke-width:0.75px;">Export PDF Report</div>
<div class="b" style="left:3479.0px;top:347.7px;width:246.0px;height:76.1px;background:linear-gradient(90deg,#3b82f6,#2563eb);border-radius:14px;box-shadow:0 2px 6px rgba(37,99,235,0.25);"></div>
<svg class="b" style="left:3513.0px;top:374.0px;width:23.0px;height:23.0px;overflow:visible" viewBox="0 0 23 23" preserveAspectRatio="none"><circle cx="11.5" cy="11.5" r="11.5" fill="#ffffff"/><path d="M6.5 11.8L10 15.2L16.5 8" fill="none" stroke="#3b82f6" stroke-width="2.2" stroke-linecap="round" stroke-linejoin="round"/></svg>
<div class="t" style="left:3551.0px;top:373.5px;font-size:23.26px;line-height:23.26px;color:#ffffff;transform:scaleX(0.9436);transform-origin:0 0;-webkit-text-stroke-width:0.75px;">Finalize Quote</div>
<div class="b" style="left:513.0px;top:507.6px;width:3262.0px;height:324.2px;background:#ffffff;border:1.2px solid #edf0f2;border-radius:20px;box-shadow:0 1px 4px rgba(0,0,0,0.07);"></div>
<svg class="b" style="left:554.4px;top:549.8px;width:30.0px;height:28.0px;overflow:visible" viewBox="0 0 30 28" preserveAspectRatio="none"><path fill="#3b82f6" d="M12.3 1.8V14.6L20.6 25.3A12.6 12.6 0 1 1 12.3 1.8Z"/><path fill="#3b82f6" d="M15.4 0.2A12.8 12.8 0 0 1 28.2 12.8H16.6Q15.4 12.8 15.4 11.6Z"/><path fill="#3b82f6" d="M18.6 15.6H29.8A12.6 12.6 0 0 1 25 24.6Z"/></svg>
<div class="t" style="left:599.7px;top:550.7px;font-size:27.52px;line-height:27.52px;color:#111827;font-weight:700;">Executive Summary</div>
<div class="b" style="left:551.0px;top:606.0px;width:777.0px;height:187.0px;background:linear-gradient(135deg,#ecfdf3,#d5fae4);border:2px solid #36ae7c;border-radius:17px;"></div>
<div class="b" style="left:584.5px;top:640.0px;width:77.0px;height:77.6px;background:#dcfce7;border-radius:17px;"></div>
<svg class="b" style="left:609.5px;top:664.0px;width:29.0px;height:28.0px;overflow:visible" viewBox="0 0 29 28" preserveAspectRatio="none"><path fill="#16a34a" d="M6.5 0H22.5V9.5Q22.5 16 16.5 18.2V21.8H19.5Q21 21.8 21 23.3V28H8V23.3Q8 21.8 9.5 21.8H12.5V18.2Q6.5 16 6.5 9.5Z"/><path d="M6.8 3.6H2.2Q1.5 11.5 8.5 13.8M22.2 3.6H26.8Q27.5 11.5 20.5 13.8" fill="none" stroke="#16a34a" stroke-width="2.8"/></svg>
<svg class="b" style="left:692.0px;top:732.5px;width:15.0px;height:19.0px;overflow:visible" viewBox="0 0 15 19" preserveAspectRatio="none"><path d="M7.5 18V2M1.5 8L7.5 2L13.5 8" fill="none" stroke="#16a34a" stroke-width="3" stroke-linecap="round" stroke-linejoin="round"/></svg>
<div class="t" style="left:720.5px;top:734.4px;font-size:18.39px;line-height:18.39px;color:#16a34a;">+14% from baseline</div>
<div class="t" style="left:689.0px;top:645.4px;font-size:18.80px;line-height:18.80px;color:#64748b;letter-spacing:-0.142px;">WIN PROBABILITY</div>
<div class="t" style="left:689.0px;top:680.7px;font-size:36.97px;line-height:36.97px;color:#1e293b;font-weight:700;">92%</div>
<div class="b" style="left:1354.0px;top:606.0px;width:777.0px;height:187.0px;background:#f8fafc;border:1px solid #f1f5f9;border-radius:17px;"></div>
<div class="b" style="left:1386.0px;top:640.0px;width:78.0px;height:77.6px;background:#dbeafe;border-radius:17px;"></div>
<svg class="b" style="left:1417.0px;top:664.5px;width:16.0px;height:28.0px;overflow:visible" viewBox="0 0 16 29" preserveAspectRatio="none"><path d="M13.8 8.2Q12.8 5.2 8.2 5.2Q2.6 5.2 2.6 9Q2.6 12.2 8 13.6Q14 15 14 19.4Q14 23.8 8 23.8Q2.8 23.8 1.8 20.2" fill="none" stroke="#3b82f6" stroke-width="3.2" stroke-linecap="round"/><path d="M8 1.5V5M8 24V27.5" stroke="#3b82f6" stroke-width="3.2" stroke-linecap="round"/></svg>
<div class="t" style="left:1490.0px;top:733.8px;font-size:18.59px;line-height:18.59px;color:#64748b;">24.3% below original</div>
<div class="t" style="left:1490.0px;top:645.4px;font-size:18.80px;line-height:18.80px;color:#64748b;letter-spacing:-0.142px;">OPTIMIZED QUOTE VALUE</div>
<div class="t" style="left:1490.0px;top:679.3px;font-size:38.66px;line-height:38.66px;color:#1e293b;font-weight:700;">$15,375,412.56</div>
<div class="b" style="left:2157.4px;top:606.0px;width:777.0px;height:187.0px;background:#f8fafc;border:1px solid #f1f5f9;border-radius:17px;"></div>
<div class="b" style="left:2189.4px;top:640.0px;width:78.0px;height:77.6px;background:#fef3c7;border-radius:17px;"></div>
<svg class="b" style="left:2216.9px;top:667.0px;width:25.0px;height:25.0px;overflow:visible" viewBox="0 0 23 23" preserveAspectRatio="none"><circle cx="4.8" cy="4.8" r="4.3" fill="#d97706"/><circle cx="18.2" cy="18.2" r="4.3" fill="#d97706"/><path d="M20.5 2.5L2.5 20.5" stroke="#d97706" stroke-width="3.2" stroke-linecap="round"/></svg>
<div class="t" style="left:2293.4px;top:733.9px;font-size:18.44px;line-height:18.44px;color:#64748b;">$3,042,803.12 profit</div>
<div class="t" style="left:2293.4px;top:645.4px;font-size:18.80px;line-height:18.80px;color:#64748b;letter-spacing:-0.45px;">PROJECTED MARGIN</div>
<div class="t" style="left:2293.4px;top:680.0px;font-size:37.74px;line-height:37.74px;color:#1e293b;font-weight:700;">16.2%</div>
<div class="b" style="left:2959.0px;top:606.0px;width:777.0px;height:187.0px;background:#f8fafc;border:1px solid #f1f5f9;border-radius:17px;"></div>
<div class="b" style="left:2991.0px;top:640.0px;width:78.0px;height:77.6px;background:#dbeafe;border-radius:17px;"></div>
<svg class="b" style="left:3017.5px;top:664.0px;width:27.0px;height:28.0px;overflow:visible" viewBox="0 0 24.2 24.7" preserveAspectRatio="none"><path fill="#3b82f6" d="M10.9 1.2Q10.9 0 9.7 0H8.6A3.1 3.1 0 0 0 5.6 3.4A4.3 4.3 0 0 0 1.6 8.3A4.8 4.8 0 0 0 0.4 16.4A4.4 4.4 0 0 0 5.6 22.2A2.8 2.8 0 0 0 8.6 24.7H9.7Q10.9 24.7 10.9 23.5Z"/><path fill="#3b82f6" d="M10.9 1.2Q10.9 0 9.7 0H8.6A3.1 3.1 0 0 0 5.6 3.4A4.3 4.3 0 0 0 1.6 8.3A4.8 4.8 0 0 0 0.4 16.4A4.4 4.4 0 0 0 5.6 22.2A2.8 2.8 0 0 0 8.6 24.7H9.7Q10.9 24.7 10.9 23.5Z" transform="translate(24.2,0) scale(-1,1)"/></svg>
<div class="t" style="left:3095.0px;top:733.8px;font-size:18.54px;line-height:18.54px;color:#64748b;">Based on 50 optimized items</div>
<div class="t" style="left:3095.0px;top:645.4px;font-size:18.80px;line-height:18.80px;color:#64748b;letter-spacing:-0.406px;">AI CONFIDENCE SCORE</div>
<div class="t" style="left:3095.0px;top:680.0px;font-size:37.74px;line-height:37.74px;color:#1e293b;font-weight:700;">94.7%</div>
<div class="b" style="left:513.0px;top:869.7px;width:3262.0px;height:884.8px;background:#ffffff;border:1.2px solid #edf0f2;border-radius:20px;box-shadow:0 1px 4px rgba(0,0,0,0.07);"></div>
<svg class="b" style="left:549.3px;top:909.8px;width:36.0px;height:28.0px;overflow:visible" viewBox="0 0 36 28" preserveAspectRatio="none"><rect x="16.4" y="0" width="3.2" height="5" rx="1" fill="#3b82f6"/><rect x="5.5" y="4.6" width="25" height="23.4" rx="4.5" fill="#3b82f6"/><rect x="0" y="11.8" width="3.4" height="9.4" rx="1.5" fill="#3b82f6"/><rect x="32.6" y="11.8" width="3.4" height="9.4" rx="1.5" fill="#3b82f6"/><circle cx="12.5" cy="13.6" r="2.6" fill="#ffffff"/><circle cx="23.5" cy="13.6" r="2.6" fill="#ffffff"/><rect x="9.6" y="20.3" width="3.6" height="2.4" rx="1.1" fill="#ffffff"/><rect x="16.2" y="20.3" width="3.6" height="2.4" rx="1.1" fill="#ffffff"/><rect x="22.8" y="20.3" width="3.6" height="2.4" rx="1.1" fill="#ffffff"/></svg>
<div class="t" style="left:597.5px;top:912.6px;font-size:27.67px;line-height:27.67px;color:#111827;font-weight:700;">Agent Performance Overview</div>
<div class="b" style="left:549.0px;top:968.0px;width:782.0px;height:235.5px;background:#f8fafc;border:1.5px solid #e2e8f0;border-left:4.5px solid #16a34a;border-radius:13px;"></div>
<svg class="b" style="left:582.9px;top:995.1px;width:24.2px;height:24.7px;overflow:visible" viewBox="0 0 24.2 24.7" preserveAspectRatio="none"><path fill="#6366f1" d="M10.9 1.2Q10.9 0 9.7 0H8.6A3.1 3.1 0 0 0 5.6 3.4A4.3 4.3 0 0 0 1.6 8.3A4.8 4.8 0 0 0 0.4 16.4A4.4 4.4 0 0 0 5.6 22.2A2.8 2.8 0 0 0 8.6 24.7H9.7Q10.9 24.7 10.9 23.5Z"/><path fill="#6366f1" d="M10.9 1.2Q10.9 0 9.7 0H8.6A3.1 3.1 0 0 0 5.6 3.4A4.3 4.3 0 0 0 1.6 8.3A4.8 4.8 0 0 0 0.4 16.4A4.4 4.4 0 0 0 5.6 22.2A2.8 2.8 0 0 0 8.6 24.7H9.7Q10.9 24.7 10.9 23.5Z" transform="translate(24.2,0) scale(-1,1)"/></svg>
<div class="t" style="left:623.8px;top:1000.4px;font-size:18.74px;line-height:18.74px;color:#1e293b;font-weight:700;">Orchestrator</div>
<div class="b" style="left:1192.0px;top:994.4px;width:113.7px;height:30.9px;background:#dcfce7;border-radius:9px;"></div>
<svg class="b" style="left:1207.0px;top:1000.5px;width:22.0px;height:19.0px;overflow:visible" viewBox="0 0 26 20" preserveAspectRatio="none"><path d="M2.5 11L9.5 17.5L23.5 2" fill="none" stroke="#16a34a" stroke-width="3.8" stroke-linecap="round" stroke-linejoin="round"/></svg>
<div class="t" style="left:1239.5px;top:1002.1px;font-size:15.64px;line-height:15.64px;color:#16a34a;">success</div>
<div class="t" style="left:580.0px;top:1049.2px;font-size:15.12px;line-height:15.12px;color:#64748b;">Execution Time</div>
<div class="t" style="left:580.0px;top:1077.4px;font-size:20.60px;line-height:20.60px;color:#0f172a;-webkit-text-stroke:0.35px #0f172a;">0.0s</div>
<div class="t" style="left:949.0px;top:1049.2px;font-size:15.12px;line-height:15.12px;color:#64748b;">Tokens Used</div>
<div class="t" style="left:949.0px;top:1077.4px;font-size:20.60px;line-height:20.60px;color:#0f172a;-webkit-text-stroke:0.35px #0f172a;">312</div>
<div class="t" style="left:580.0px;top:1122.7px;font-size:15.12px;line-height:15.12px;color:#64748b;">Findings</div>
<div class="t" style="left:580.0px;top:1150.9px;font-size:20.60px;line-height:20.60px;color:#0f172a;-webkit-text-stroke:0.35px #0f172a;">0</div>
<div class="t" style="left:949.0px;top:1122.7px;font-size:15.12px;line-height:15.12px;color:#64748b;">Confidence</div>
<div class="t" style="left:949.0px;top:1150.9px;font-size:20.60px;line-height:20.60px;color:#0f172a;-webkit-text-stroke:0.35px #0f172a;">85%</div>
<div class="b" style="left:1351.0px;top:968.0px;width:782.0px;height:235.5px;background:#f8fafc;border:1.5px solid #e2e8f0;border-left:4.5px solid #16a34a;border-radius:13px;"></div>
<svg class="b" style="left:1384.6px;top:994.9px;width:25.3px;height:25.0px;overflow:visible" viewBox="0 0 25.3 25" preserveAspectRatio="none"><circle cx="12.65" cy="12.5" r="12.5" fill="#10b981"/><path d="M0 12.5H25.3" stroke="#f8fafc" stroke-width="2.6"/><path d="M12.65 0Q4.5 6 4.5 12.5Q4.5 19 12.65 25" fill="none" stroke="#f8fafc" stroke-width="2.4"/><path d="M12.65 0Q20.8 6 20.8 12.5Q20.8 19 12.65 25" fill="none" stroke="#f8fafc" stroke-width="2.4"/></svg>
<div class="t" style="left:1425.8px;top:1000.4px;font-size:18.74px;line-height:18.74px;color:#1e293b;font-weight:700;">Market Intelligence Agent</div>
<div class="b" style="left:1994.0px;top:994.4px;width:113.7px;height:30.9px;background:#dcfce7;border-radius:9px;"></div>
<svg class="b" style="left:2009.0px;top:1000.5px;width:22.0px;height:19.0px;overflow:visible" viewBox="0 0 26 20" preserveAspectRatio="none"><path d="M2.5 11L9.5 17.5L23.5 2" fill="none" stroke="#16a34a" stroke-width="3.8" stroke-linecap="round" stroke-linejoin="round"/></svg>
<div class="t" style="left:2041.5px;top:1002.1px;font-size:15.64px;line-height:15.64px;color:#16a34a;">success</div>
<div class="t" style="left:1382.0px;top:1049.2px;font-size:15.12px;line-height:15.12px;color:#64748b;">Execution Time</div>
<div class="t" style="left:1382.0px;top:1077.4px;font-size:20.60px;line-height:20.60px;color:#0f172a;-webkit-text-stroke:0.35px #0f172a;">0.0s</div>
<div class="t" style="left:1751.0px;top:1049.2px;font-size:15.12px;line-height:15.12px;color:#64748b;">Tokens Used</div>
<div class="t" style="left:1751.0px;top:1077.4px;font-size:20.60px;line-height:20.60px;color:#0f172a;-webkit-text-stroke:0.35px #0f172a;">493</div>
<div class="t" style="left:1382.0px;top:1122.7px;font-size:15.12px;line-height:15.12px;color:#64748b;">Findings</div>
<div class="t" style="left:1382.0px;top:1150.9px;font-size:20.60px;line-height:20.60px;color:#0f172a;-webkit-text-stroke:0.35px #0f172a;">2</div>
<div class="t" style="left:1751.0px;top:1122.7px;font-size:15.12px;line-height:15.12px;color:#64748b;">Confidence</div>
<div class="t" style="left:1751.0px;top:1150.9px;font-size:20.60px;line-height:20.60px;color:#0f172a;-webkit-text-stroke:0.35px #0f172a;">98%</div>
<div class="b" style="left:2153.0px;top:968.0px;width:782.0px;height:235.5px;background:#f8fafc;border:1.5px solid #e2e8f0;border-left:4.5px solid #16a34a;border-radius:13px;"></div>
<svg class="b" style="left:2184.7px;top:994.9px;width:28.2px;height:25.0px;overflow:visible" viewBox="0 0 28.2 25" preserveAspectRatio="none"><path fill="#f59e0b" d="M0 6.5Q0 5 1.4 4.4L14.1 0L26.8 4.4Q28.2 5 28.2 6.5V25H25.2V13.3Q25.2 10.7 22.6 10.7H5.6Q3 10.7 3 13.3V25H0Z"/><rect x="5.6" y="12.8" width="17" height="3" fill="#f59e0b"/><rect x="5.6" y="17.5" width="17" height="3" fill="#f59e0b"/><rect x="5.6" y="22" width="17" height="3" fill="#f59e0b"/></svg>
<div class="t" style="left:2227.8px;top:1000.4px;font-size:18.74px;line-height:18.74px;color:#1e293b;font-weight:700;">Inventory Optimizer Agent</div>
<div class="b" style="left:2796.0px;top:994.4px;width:113.7px;height:30.9px;background:#dcfce7;border-radius:9px;"></div>
<svg class="b" style="left:2811.0px;top:1000.5px;width:22.0px;height:19.0px;overflow:visible" viewBox="0 0 26 20" preserveAspectRatio="none"><path d="M2.5 11L9.5 17.5L23.5 2" fill="none" stroke="#16a34a" stroke-width="3.8" stroke-linecap="round" stroke-linejoin="round"/></svg>
<div class="t" style="left:2843.5px;top:1002.1px;font-size:15.64px;line-height:15.64px;color:#16a34a;">success</div>
<div class="t" style="left:2184.0px;top:1049.2px;font-size:15.12px;line-height:15.12px;color:#64748b;">Execution Time</div>
<div class="t" style="left:2184.0px;top:1077.4px;font-size:20.60px;line-height:20.60px;color:#0f172a;-webkit-text-stroke:0.35px #0f172a;">0.0s</div>
<div class="t" style="left:2553.0px;top:1049.2px;font-size:15.12px;line-height:15.12px;color:#64748b;">Tokens Used</div>
<div class="t" style="left:2553.0px;top:1077.4px;font-size:20.60px;line-height:20.60px;color:#0f172a;-webkit-text-stroke:0.35px #0f172a;">377</div>
<div class="t" style="left:2184.0px;top:1122.7px;font-size:15.12px;line-height:15.12px;color:#64748b;">Findings</div>
<div class="t" style="left:2184.0px;top:1150.9px;font-size:20.60px;line-height:20.60px;color:#0f172a;-webkit-text-stroke:0.35px #0f172a;">2</div>
<div class="t" style="left:2553.0px;top:1122.7px;font-size:15.12px;line-height:15.12px;color:#64748b;">Confidence</div>
<div class="t" style="left:2553.0px;top:1150.9px;font-size:20.60px;line-height:20.60px;color:#0f172a;-webkit-text-stroke:0.35px #0f172a;">93%</div>
<div class="b" style="left:2955.0px;top:968.0px;width:782.0px;height:235.5px;background:#f8fafc;border:1.5px solid #e2e8f0;border-left:4.5px solid #16a34a;border-radius:13px;"></div>
<svg class="b" style="left:2991.6px;top:994.9px;width:19.3px;height:25.0px;overflow:visible" viewBox="0 0 19.3 25" preserveAspectRatio="none"><path fill="#8b5cf6" d="M2.6 0H12.5L19.3 6.8V22.4Q19.3 25 16.7 25H2.6Q0 25 0 22.4V2.6Q0 0 2.6 0Z"/><path fill="#f8fafc" d="M10.7 3.8V8.8H15.6Z"/><rect x="3.4" y="3.3" width="3.8" height="2.2" rx="1.1" fill="#f8fafc"/><rect x="3.4" y="7.8" width="3.8" height="2.2" rx="0.6" fill="#f8fafc"/><path d="M4 20.3L7.5 15.8L9.4 19.4H15.5" fill="none" stroke="#f8fafc" stroke-width="2" stroke-linejoin="round"/></svg>
<div class="t" style="left:3029.8px;top:1000.4px;font-size:18.74px;line-height:18.74px;color:#1e293b;font-weight:700;">Contract Analyzer Agent</div>
<div class="b" style="left:3598.0px;top:994.4px;width:113.7px;height:30.9px;background:#dcfce7;border-radius:9px;"></div>
<svg class="b" style="left:3613.0px;top:1000.5px;width:22.0px;height:19.0px;overflow:visible" viewBox="0 0 26 20" preserveAspectRatio="none"><path d="M2.5 11L9.5 17.5L23.5 2" fill="none" stroke="#16a34a" stroke-width="3.8" stroke-linecap="round" stroke-linejoin="round"/></svg>
<div class="t" style="left:3645.5px;top:1002.1px;font-size:15.64px;line-height:15.64px;color:#16a34a;">success</div>
<div class="t" style="left:2986.0px;top:1049.2px;font-size:15.12px;line-height:15.12px;color:#64748b;">Execution Time</div>
<div class="t" style="left:2986.0px;top:1077.4px;font-size:20.60px;line-height:20.60px;color:#0f172a;-webkit-text-stroke:0.35px #0f172a;">0.0s</div>
<div class="t" style="left:3355.0px;top:1049.2px;font-size:15.12px;line-height:15.12px;color:#64748b;">Tokens Used</div>
<div class="t" style="left:3355.0px;top:1077.4px;font-size:20.60px;line-height:20.60px;color:#0f172a;-webkit-text-stroke:0.35px #0f172a;">455</div>
<div class="t" style="left:2986.0px;top:1122.7px;font-size:15.12px;line-height:15.12px;color:#64748b;">Findings</div>
<div class="t" style="left:2986.0px;top:1150.9px;font-size:20.60px;line-height:20.60px;color:#0f172a;-webkit-text-stroke:0.35px #0f172a;">2</div>
<div class="t" style="left:3355.0px;top:1122.7px;font-size:15.12px;line-height:15.12px;color:#64748b;">Confidence</div>
<div class="t" style="left:3355.0px;top:1150.9px;font-size:20.60px;line-height:20.60px;color:#0f172a;-webkit-text-stroke:0.35px #0f172a;">86%</div>
<div class="b" style="left:549.0px;top:1224.5px;width:782.0px;height:237.0px;background:#f8fafc;border:1.5px solid #e2e8f0;border-left:4.5px solid #16a34a;border-radius:13px;"></div>
<svg class="b" style="left:582.0px;top:1254.9px;width:25.5px;height:21.7px;overflow:visible" viewBox="0 0 25.5 21.7" preserveAspectRatio="none"><path d="M1.9 1.9V17.2Q1.9 19.8 4.5 19.8H23.6" fill="none" stroke="#ef4444" stroke-width="3.6" stroke-linecap="round"/><path d="M8 10.6L12.6 6L16.2 9.8L22.5 3.8" fill="none" stroke="#ef4444" stroke-width="3.4" stroke-linecap="round" stroke-linejoin="round"/></svg>
<div class="t" style="left:623.8px;top:1256.9px;font-size:18.74px;line-height:18.74px;color:#1e293b;font-weight:700;">Margin Optimizer Agent</div>
<div class="b" style="left:1192.0px;top:1250.9px;width:113.7px;height:30.9px;background:#dcfce7;border-radius:9px;"></div>
<svg class="b" style="left:1207.0px;top:1257.0px;width:22.0px;height:19.0px;overflow:visible" viewBox="0 0 26 20" preserveAspectRatio="none"><path d="M2.5 11L9.5 17.5L23.5 2" fill="none" stroke="#16a34a" stroke-width="3.8" stroke-linecap="round" stroke-linejoin="round"/></svg>
<div class="t" style="left:1239.5px;top:1258.6px;font-size:15.64px;line-height:15.64px;color:#16a34a;">success</div>
<div class="t" style="left:580.0px;top:1305.7px;font-size:15.12px;line-height:15.12px;color:#64748b;">Execution Time</div>
<div class="t" style="left:580.0px;top:1333.9px;font-size:20.60px;line-height:20.60px;color:#0f172a;-webkit-text-stroke:0.35px #0f172a;">0.0s</div>
<div class="t" style="left:949.0px;top:1305.7px;font-size:15.12px;line-height:15.12px;color:#64748b;">Tokens Used</div>
<div class="t" style="left:949.0px;top:1333.9px;font-size:20.60px;line-height:20.60px;color:#0f172a;-webkit-text-stroke:0.35px #0f172a;">597</div>
<div class="t" style="left:580.0px;top:1379.2px;font-size:15.12px;line-height:15.12px;color:#64748b;">Findings</div>
<div class="t" style="left:580.0px;top:1407.4px;font-size:20.60px;line-height:20.60px;color:#0f172a;-webkit-text-stroke:0.35px #0f172a;">2</div>
<div class="t" style="left:949.0px;top:1379.2px;font-size:15.12px;line-height:15.12px;color:#64748b;">Confidence</div>
<div class="t" style="left:949.0px;top:1407.4px;font-size:20.60px;line-height:20.60px;color:#0f172a;-webkit-text-stroke:0.35px #0f172a;">92%</div>
<div class="b" style="left:1351.0px;top:1224.5px;width:782.0px;height:237.0px;background:#f8fafc;border:1.5px solid #e2e8f0;border-left:4.5px solid #16a34a;border-radius:13px;"></div>
<svg class="b" style="left:1384.6px;top:1254.8px;width:25.2px;height:21.8px;overflow:visible" viewBox="0 0 25.2 21.8" preserveAspectRatio="none"><path d="M1.9 1.9V17.2Q1.9 19.9 4.6 19.9H23.3" fill="none" stroke="#06b6d4" stroke-width="3.5" stroke-linecap="round"/><path fill="#06b6d4" d="M6.6 7.5L12 2.3L16.2 6.5L19.6 3.2L24.2 7.8V15Q24.2 15.8 23.4 15.8H7.4Q6.6 15.8 6.6 15Z"/></svg>
<div class="t" style="left:1425.8px;top:1256.9px;font-size:18.74px;line-height:18.74px;color:#1e293b;font-weight:700;">Demand Forecaster Agent</div>
<div class="b" style="left:1994.0px;top:1250.9px;width:113.7px;height:30.9px;background:#dcfce7;border-radius:9px;"></div>
<svg class="b" style="left:2009.0px;top:1257.0px;width:22.0px;height:19.0px;overflow:visible" viewBox="0 0 26 20" preserveAspectRatio="none"><path d="M2.5 11L9.5 17.5L23.5 2" fill="none" stroke="#16a34a" stroke-width="3.8" stroke-linecap="round" stroke-linejoin="round"/></svg>
<div class="t" style="left:2041.5px;top:1258.6px;font-size:15.64px;line-height:15.64px;color:#16a34a;">success</div>
<div class="t" style="left:1382.0px;top:1305.7px;font-size:15.12px;line-height:15.12px;color:#64748b;">Execution Time</div>
<div class="t" style="left:1382.0px;top:1333.9px;font-size:20.60px;line-height:20.60px;color:#0f172a;-webkit-text-stroke:0.35px #0f172a;">0.0s</div>
<div class="t" style="left:1751.0px;top:1305.7px;font-size:15.12px;line-height:15.12px;color:#64748b;">Tokens Used</div>
<div class="t" style="left:1751.0px;top:1333.9px;font-size:20.60px;line-height:20.60px;color:#0f172a;-webkit-text-stroke:0.35px #0f172a;">533</div>
<div class="t" style="left:1382.0px;top:1379.2px;font-size:15.12px;line-height:15.12px;color:#64748b;">Findings</div>
<div class="t" style="left:1382.0px;top:1407.4px;font-size:20.60px;line-height:20.60px;color:#0f172a;-webkit-text-stroke:0.35px #0f172a;">2</div>
<div class="t" style="left:1751.0px;top:1379.2px;font-size:15.12px;line-height:15.12px;color:#64748b;">Confidence</div>
<div class="t" style="left:1751.0px;top:1407.4px;font-size:20.60px;line-height:20.60px;color:#0f172a;-webkit-text-stroke:0.35px #0f172a;">99%</div>
<div class="b" style="left:2153.0px;top:1224.5px;width:782.0px;height:237.0px;background:#f8fafc;border:1.5px solid #e2e8f0;border-left:4.5px solid #16a34a;border-radius:13px;"></div>
<svg class="b" style="left:2187.2px;top:1253.0px;width:23.6px;height:24.7px;overflow:visible" viewBox="0 0 23.6 24.7" preserveAspectRatio="none"><path fill="#ec4899" d="M11.8 0L2 4.2Q-0.5 5.3 0.1 8.3Q1.4 18.2 11.8 24.7Q22.2 18.2 23.5 8.3Q24.1 5.3 21.6 4.2Z"/><path fill="#f8fafc" d="M12.4 3.6V21.1Q19.6 15.8 20.4 8.2L12.4 4.3Z"/></svg>
<div class="t" style="left:2227.8px;top:1256.9px;font-size:18.74px;line-height:18.74px;color:#1e293b;font-weight:700;">Risk Assessor Agent</div>
<div class="b" style="left:2796.0px;top:1250.9px;width:113.7px;height:30.9px;background:#dcfce7;border-radius:9px;"></div>
<svg class="b" style="left:2811.0px;top:1257.0px;width:22.0px;height:19.0px;overflow:visible" viewBox="0 0 26 20" preserveAspectRatio="none"><path d="M2.5 11L9.5 17.5L23.5 2" fill="none" stroke="#16a34a" stroke-width="3.8" stroke-linecap="round" stroke-linejoin="round"/></svg>
<div class="t" style="left:2843.5px;top:1258.6px;font-size:15.64px;line-height:15.64px;color:#16a34a;">success</div>
<div class="t" style="left:2184.0px;top:1305.7px;font-size:15.12px;line-height:15.12px;color:#64748b;">Execution Time</div>
<div class="t" style="left:2184.0px;top:1333.9px;font-size:20.60px;line-height:20.60px;color:#0f172a;-webkit-text-stroke:0.35px #0f172a;">0.0s</div>
<div class="t" style="left:2553.0px;top:1305.7px;font-size:15.12px;line-height:15.12px;color:#64748b;">Tokens Used</div>
<div class="t" style="left:2553.0px;top:1333.9px;font-size:20.60px;line-height:20.60px;color:#0f172a;-webkit-text-stroke:0.35px #0f172a;">469</div>
<div class="t" style="left:2184.0px;top:1379.2px;font-size:15.12px;line-height:15.12px;color:#64748b;">Findings</div>
<div class="t" style="left:2184.0px;top:1407.4px;font-size:20.60px;line-height:20.60px;color:#0f172a;-webkit-text-stroke:0.35px #0f172a;">3</div>
<div class="t" style="left:2553.0px;top:1379.2px;font-size:15.12px;line-height:15.12px;color:#64748b;">Confidence</div>
<div class="t" style="left:2553.0px;top:1407.4px;font-size:20.60px;line-height:20.60px;color:#0f172a;-webkit-text-stroke:0.35px #0f172a;">94%</div>
<div class="b" style="left:2955.0px;top:1224.5px;width:782.0px;height:237.0px;background:#f8fafc;border:1.5px solid #e2e8f0;border-left:4.5px solid #16a34a;border-radius:13px;"></div>
<svg class="b" style="left:2987.0px;top:1254.6px;width:28.7px;height:23.1px;overflow:visible" viewBox="0 0 28.7 23.1" preserveAspectRatio="none"><rect x="2.2" y="5.3" width="10.2" height="10.4" rx="2" fill="#0ea5e9" transform="rotate(-16 7.3 10.5)"/><path fill="#0ea5e9" d="M17.6 0.9Q16 0.9 16 3V17L1.2 21.2Q-0.4 21.8 0.2 23Q0.6 23.6 2 23.1L18.2 18.5Q19 21.8 22.7 22.2Q26.2 22.2 27.4 19V0.7Z"/><circle cx="22.6" cy="18.5" r="1.8" fill="#f8fafc"/></svg>
<div class="t" style="left:3029.8px;top:1256.9px;font-size:18.74px;line-height:18.74px;color:#1e293b;font-weight:700;">Supply Chain Intelligence Agent</div>
<div class="b" style="left:3598.0px;top:1250.9px;width:113.7px;height:30.9px;background:#dcfce7;border-radius:9px;"></div>
<svg class="b" style="left:3613.0px;top:1257.0px;width:22.0px;height:19.0px;overflow:visible" viewBox="0 0 26 20" preserveAspectRatio="none"><path d="M2.5 11L9.5 17.5L23.5 2" fill="none" stroke="#16a34a" stroke-width="3.8" stroke-linecap="round" stroke-linejoin="round"/></svg>
<div class="t" style="left:3645.5px;top:1258.6px;font-size:15.64px;line-height:15.64px;color:#16a34a;">success</div>
<div class="t" style="left:2986.0px;top:1305.7px;font-size:15.12px;line-height:15.12px;color:#64748b;">Execution Time</div>
<div class="t" style="left:2986.0px;top:1333.9px;font-size:20.60px;line-height:20.60px;color:#0f172a;-webkit-text-stroke:0.35px #0f172a;">0.0s</div>
<div class="t" style="left:3355.0px;top:1305.7px;font-size:15.12px;line-height:15.12px;color:#64748b;">Tokens Used</div>
<div class="t" style="left:3355.0px;top:1333.9px;font-size:20.60px;line-height:20.60px;color:#0f172a;-webkit-text-stroke:0.35px #0f172a;">707</div>
<div class="t" style="left:2986.0px;top:1379.2px;font-size:15.12px;line-height:15.12px;color:#64748b;">Findings</div>
<div class="t" style="left:2986.0px;top:1407.4px;font-size:20.60px;line-height:20.60px;color:#0f172a;-webkit-text-stroke:0.35px #0f172a;">3</div>
<div class="t" style="left:3355.0px;top:1379.2px;font-size:15.12px;line-height:15.12px;color:#64748b;">Confidence</div>
<div class="t" style="left:3355.0px;top:1407.4px;font-size:20.60px;line-height:20.60px;color:#0f172a;-webkit-text-stroke:0.35px #0f172a;">99%</div>
<div class="b" style="left:549.0px;top:1481.0px;width:782.0px;height:235.5px;background:#f8fafc;border:1.5px solid #e2e8f0;border-left:4.5px solid #16a34a;border-radius:13px;"></div>
<svg class="b" style="left:582.0px;top:1509.0px;width:25.8px;height:24.0px;overflow:visible" viewBox="0 0 25.8 24" preserveAspectRatio="none"><path fill="#22c55e" d="M24.5 0Q26.7 1.5 25.4 9Q23.4 20.4 13.5 21.7Q8.2 22.2 5.6 17.2Q3.5 19.8 2.2 23.4Q1.5 24.4 0.3 23.6Q-0.3 22.8 0.5 21.4Q3.4 15 11.4 12.7Q7.5 12 5.3 10.8Q8.5 5.7 14.2 5.5Q20.5 5.5 24.5 0Z"/><path d="M5.2 10.8Q9 9.8 15.6 10.8" fill="none" stroke="#f8fafc" stroke-width="2.2"/></svg>
<div class="t" style="left:623.8px;top:1513.4px;font-size:18.74px;line-height:18.74px;color:#1e293b;font-weight:700;">ESG &amp; Sustainability Agent</div>
<div class="b" style="left:1192.0px;top:1507.4px;width:113.7px;height:30.9px;background:#dcfce7;border-radius:9px;"></div>
<svg class="b" style="left:1207.0px;top:1513.5px;width:22.0px;height:19.0px;overflow:visible" viewBox="0 0 26 20" preserveAspectRatio="none"><path d="M2.5 11L9.5 17.5L23.5 2" fill="none" stroke="#16a34a" stroke-width="3.8" stroke-linecap="round" stroke-linejoin="round"/></svg>
<div class="t" style="left:1239.5px;top:1515.1px;font-size:15.64px;line-height:15.64px;color:#16a34a;">success</div>
<div class="t" style="left:580.0px;top:1562.2px;font-size:15.12px;line-height:15.12px;color:#64748b;">Execution Time</div>
<div class="t" style="left:580.0px;top:1590.4px;font-size:20.60px;line-height:20.60px;color:#0f172a;-webkit-text-stroke:0.35px #0f172a;">0.0s</div>
<div class="t" style="left:949.0px;top:1562.2px;font-size:15.12px;line-height:15.12px;color:#64748b;">Tokens Used</div>
<div class="t" style="left:949.0px;top:1590.4px;font-size:20.60px;line-height:20.60px;color:#0f172a;-webkit-text-stroke:0.35px #0f172a;">726</div>
<div class="t" style="left:580.0px;top:1635.7px;font-size:15.12px;line-height:15.12px;color:#64748b;">Findings</div>
<div class="t" style="left:580.0px;top:1663.9px;font-size:20.60px;line-height:20.60px;color:#0f172a;-webkit-text-stroke:0.35px #0f172a;">3</div>
<div class="t" style="left:949.0px;top:1635.7px;font-size:15.12px;line-height:15.12px;color:#64748b;">Confidence</div>
<div class="t" style="left:949.0px;top:1663.9px;font-size:20.60px;line-height:20.60px;color:#0f172a;-webkit-text-stroke:0.35px #0f172a;">98%</div>
<div class="b" style="left:1351.0px;top:1481.0px;width:782.0px;height:235.5px;background:#f8fafc;border:1.5px solid #e2e8f0;border-left:4.5px solid #16a34a;border-radius:13px;"></div>
<svg class="b" style="left:1384.3px;top:1507.0px;width:27.0px;height:27.0px;overflow:visible" viewBox="0 0 27 27" preserveAspectRatio="none"><path d="M6.8 8.4L12.7 2.5" stroke="#a855f7" stroke-width="4.6" stroke-linecap="round"/><path d="M18.3 19.8L24.2 13.9" stroke="#a855f7" stroke-width="4.6" stroke-linecap="round"/><path fill="#a855f7" d="M14.1 6.2L20 12.1L14 18L8.1 12.1Z"/><path d="M2.3 24.7L12.5 14.4" stroke="#a855f7" stroke-width="4.2" stroke-linecap="round"/></svg>
<div class="t" style="left:1425.8px;top:1513.4px;font-size:18.74px;line-height:18.74px;color:#1e293b;font-weight:700;">Regulatory Compliance Agent</div>
<div class="b" style="left:1994.0px;top:1507.4px;width:113.7px;height:30.9px;background:#dcfce7;border-radius:9px;"></div>
<svg class="b" style="left:2009.0px;top:1513.5px;width:22.0px;height:19.0px;overflow:visible" viewBox="0 0 26 20" preserveAspectRatio="none"><path d="M2.5 11L9.5 17.5L23.5 2" fill="none" stroke="#16a34a" stroke-width="3.8" stroke-linecap="round" stroke-linejoin="round"/></svg>
<div class="t" style="left:2041.5px;top:1515.1px;font-size:15.64px;line-height:15.64px;color:#16a34a;">success</div>
<div class="t" style="left:1382.0px;top:1562.2px;font-size:15.12px;line-height:15.12px;color:#64748b;">Execution Time</div>
<div class="t" style="left:1382.0px;top:1590.4px;font-size:20.60px;line-height:20.60px;color:#0f172a;-webkit-text-stroke:0.35px #0f172a;">0.0s</div>
<div class="t" style="left:1751.0px;top:1562.2px;font-size:15.12px;line-height:15.12px;color:#64748b;">Tokens Used</div>
<div class="t" style="left:1751.0px;top:1590.4px;font-size:20.60px;line-height:20.60px;color:#0f172a;-webkit-text-stroke:0.35px #0f172a;">733</div>
<div class="t" style="left:1382.0px;top:1635.7px;font-size:15.12px;line-height:15.12px;color:#64748b;">Findings</div>
<div class="t" style="left:1382.0px;top:1663.9px;font-size:20.60px;line-height:20.60px;color:#0f172a;-webkit-text-stroke:0.35px #0f172a;">4</div>
<div class="t" style="left:1751.0px;top:1635.7px;font-size:15.12px;line-height:15.12px;color:#64748b;">Confidence</div>
<div class="t" style="left:1751.0px;top:1663.9px;font-size:20.60px;line-height:20.60px;color:#0f172a;-webkit-text-stroke:0.35px #0f172a;">99%</div>
<div class="b" style="left:513.0px;top:1792.5px;width:3262.0px;height:507.5px;background:#ffffff;border:1.2px solid #edf0f2;border-radius:20px;box-shadow:0 1px 4px rgba(0,0,0,0.07);"></div>
<svg class="b" style="left:555.6px;top:1833.0px;width:23.4px;height:28.7px;overflow:visible" viewBox="0 0 22.3 29" preserveAspectRatio="none"><path fill="#3b82f6" d="M11.15 0C17.3 0 22.3 4.9 22.3 11C22.3 15.5 19.6 17.3 17.6 20.2Q16.6 21.7 16.4 23H5.9Q5.7 21.7 4.7 20.2C2.7 17.3 0 15.5 0 11C0 4.9 5 0 11.15 0Z"/><path fill="#3b82f6" d="M5.9 24.6H16.4V25.3Q16.4 29 12.7 29H9.6Q5.9 29 5.9 25.3Z"/><path d="M5.3 10.6Q5.5 5.5 10.4 5" fill="none" stroke="#ffffff" stroke-width="1.8" stroke-linecap="round"/></svg>
<div class="t" style="left:597.6px;top:1836.0px;font-size:27.36px;line-height:27.36px;color:#111827;font-weight:700;">AI Recommendations (12)</div>
<div class="b" style="left:549.0px;top:1891.2px;width:121.5px;height:62.1px;background:#3b82f6;border-radius:11px;"></div>
<div class="t" style="left:576.5px;top:1913.2px;font-size:20.96px;line-height:20.96px;color:#ffffff;">All (12)</div>
<div class="b" style="left:683.8px;top:1891.2px;width:203.8px;height:62.1px;background:#ffffff;border:1.5px solid #e5e7eb;border-radius:11px;"></div>
<div class="t" style="left:710.0px;top:1912.7px;font-size:21.60px;line-height:21.60px;color:#374151;">High Priority (5)</div>
<div class="b" style="left:901.3px;top:1891.2px;width:173.1px;height:62.1px;background:#ffffff;border:1.5px solid #e5e7eb;border-radius:11px;"></div>
<div class="t" style="left:927.5px;top:1913.0px;font-size:21.26px;line-height:21.26px;color:#374151;">Accepted (0)</div>
<div class="b" style="left:549.0px;top:1980.0px;width:1582.0px;height:420.0px;background:#f8fafc;border:1.5px solid #e2e8f0;border-left:4.5px solid #ef4444;border-radius:13px;"></div>
<svg class="b" style="left:581.7px;top:2013.0px;width:19.0px;height:18.0px;overflow:visible" viewBox="0 0 19 18" preserveAspectRatio="none"><path fill="#3b82f6" d="M0 1.8Q0 0 1.8 0H8.6L18.4 9.8Q19.4 10.8 18.4 11.8L12.2 18Q11.2 19 10.2 18L0 8Z"/><circle cx="4.6" cy="4.6" r="1.7" fill="#f8fafc"/></svg>
<div class="t" style="left:612.8px;top:2011.5px;font-size:18.79px;line-height:18.79px;color:#3b82f6;">Price Adjustment</div>
<div class="t" style="left:579.4px;top:2053.6px;font-size:21.45px;line-height:21.45px;color:#111827;font-weight:700;">Aggressive Slow-Mover Pricing</div>
<div class="t" style="left:579.4px;top:2093.0px;font-size:20.27px;line-height:20.27px;color:#64748b;">Apply 15-25% discounts on 23 slow-moving items to free up $42,500 in tied-up capital.</div>
<div class="b" style="left:2040.0px;top:2006.5px;width:63.7px;height:30.9px;background:#fee2e2;border-radius:8px;"></div>
<div class="t" style="left:2052.3px;top:2014.9px;font-size:15.68px;line-height:15.68px;color:#dc2626;font-weight:700;">HIGH</div>
<svg class="b" style="left:583.4px;top:2143.2px;width:9.5px;height:15.5px;overflow:visible" viewBox="0 0 16 29" preserveAspectRatio="none"><path d="M13.8 8.2Q12.8 5.2 8.2 5.2Q2.6 5.2 2.6 9Q2.6 12.2 8 13.6Q14 15 14 19.4Q14 23.8 8 23.8Q2.8 23.8 1.8 20.2" fill="none" stroke="#3b82f6" stroke-width="3.2" stroke-linecap="round"/><path d="M8 1.5V5M8 24V27.5" stroke="#3b82f6" stroke-width="3.2" stroke-linecap="round"/></svg>
<div class="t" style="left:606.0px;top:2140.1px;font-size:21.80px;line-height:21.80px;color:#4b5563;transform:scaleX(0.8248);transform-origin:0 0;">-$12,850.00</div>
<svg class="b" style="left:723.6px;top:2144.0px;width:14.0px;height:14.0px;overflow:visible" viewBox="0 0 23 23" preserveAspectRatio="none"><circle cx="4.8" cy="4.8" r="4.3" fill="#3b82f6"/><circle cx="18.2" cy="18.2" r="4.3" fill="#3b82f6"/><path d="M20.5 2.5L2.5 20.5" stroke="#3b82f6" stroke-width="3.2" stroke-linecap="round"/></svg>
<div class="t" style="left:747.7px;top:2140.1px;font-size:21.80px;line-height:21.80px;color:#4b5563;transform:scaleX(0.8430);transform-origin:0 0;">-2.1% margin</div>
<svg class="b" style="left:878.9px;top:2144.5px;width:16.5px;height:15.0px;overflow:visible" viewBox="0 0 29 28" preserveAspectRatio="none"><path fill="#3b82f6" d="M6.5 0H22.5V9.5Q22.5 16 16.5 18.2V21.8H19.5Q21 21.8 21 23.3V28H8V23.3Q8 21.8 9.5 21.8H12.5V18.2Q6.5 16 6.5 9.5Z"/><path d="M6.8 3.6H2.2Q1.5 11.5 8.5 13.8M22.2 3.6H26.8Q27.5 11.5 20.5 13.8" fill="none" stroke="#3b82f6" stroke-width="2.8"/></svg>
<div class="t" style="left:904.0px;top:2140.1px;font-size:21.80px;line-height:21.80px;color:#4b5563;transform:scaleX(0.8434);transform-origin:0 0;">+5% win</div>
<svg class="b" style="left:995.7px;top:2144.5px;width:15.0px;height:15.0px;overflow:visible" viewBox="0 0 28.5 28.5" preserveAspectRatio="none"><circle cx="14.25" cy="14.25" r="14.25" fill="#3b82f6"/><path d="M13.6 6.5V14.6L18.5 18.2" fill="none" stroke="#f8fafc" stroke-width="2.6" stroke-linecap="round"/></svg>
<div class="t" style="left:1020.0px;top:2140.1px;font-size:21.80px;line-height:21.80px;color:#4b5563;transform:scaleX(0.8607);transform-origin:0 0;">Immediate</div>
<div class="b" style="left:2157.4px;top:1980.0px;width:1579.1px;height:420.0px;background:#f8fafc;border:1.5px solid #e2e8f0;border-left:4.5px solid #f59e0b;border-radius:13px;"></div>
<svg class="b" style="left:2190.4px;top:2012.0px;width:15.0px;height:19.0px;overflow:visible" viewBox="0 0 15 19" preserveAspectRatio="none"><path d="M7.5 18V2M1.5 8L7.5 2L13.5 8" fill="none" stroke="#3b82f6" stroke-width="2.6" stroke-linecap="round" stroke-linejoin="round"/></svg>
<div class="t" style="left:2221.2px;top:2011.7px;font-size:18.53px;line-height:18.53px;color:#3b82f6;">Upsell</div>
<div class="t" style="left:2187.8px;top:2053.8px;font-size:21.29px;line-height:21.29px;color:#111827;font-weight:700;">Bundle Upsell for Volume Tier</div>
<div class="t" style="left:2187.8px;top:2093.2px;font-size:20.12px;line-height:20.12px;color:#64748b;">Suggest additional 55 units to help customer reach volume tier bonus, saving them $48K annually.</div>
<div class="b" style="left:3622.8px;top:2006.5px;width:89.5px;height:31.5px;background:#fef3c7;border-radius:8px;"></div>
<div class="t" style="left:3635.4px;top:2014.8px;font-size:15.83px;line-height:15.83px;color:#d97706;font-weight:700;">MEDIUM</div>
<svg class="b" style="left:2190.2px;top:2143.2px;width:9.5px;height:15.5px;overflow:visible" viewBox="0 0 16 29" preserveAspectRatio="none"><path d="M13.8 8.2Q12.8 5.2 8.2 5.2Q2.6 5.2 2.6 9Q2.6 12.2 8 13.6Q14 15 14 19.4Q14 23.8 8 23.8Q2.8 23.8 1.8 20.2" fill="none" stroke="#3b82f6" stroke-width="3.2" stroke-linecap="round"/><path d="M8 1.5V5M8 24V27.5" stroke="#3b82f6" stroke-width="3.2" stroke-linecap="round"/></svg>
<div class="t" style="left:2214.4px;top:2140.1px;font-size:21.80px;line-height:21.80px;color:#4b5563;transform:scaleX(0.8206);transform-origin:0 0;">+$15,420.00</div>
<svg class="b" style="left:2335.6px;top:2144.0px;width:14.0px;height:14.0px;overflow:visible" viewBox="0 0 23 23" preserveAspectRatio="none"><circle cx="4.8" cy="4.8" r="4.3" fill="#3b82f6"/><circle cx="18.2" cy="18.2" r="4.3" fill="#3b82f6"/><path d="M20.5 2.5L2.5 20.5" stroke="#3b82f6" stroke-width="3.2" stroke-linecap="round"/></svg>
<div class="t" style="left:2361.7px;top:2140.1px;font-size:21.80px;line-height:21.80px;color:#4b5563;transform:scaleX(0.8407);transform-origin:0 0;">+0.5% margin</div>
<svg class="b" style="left:2495.8px;top:2144.5px;width:16.5px;height:15.0px;overflow:visible" viewBox="0 0 29 28" preserveAspectRatio="none"><path fill="#3b82f6" d="M6.5 0H22.5V9.5Q22.5 16 16.5 18.2V21.8H19.5Q21 21.8 21 23.3V28H8V23.3Q8 21.8 9.5 21.8H12.5V18.2Q6.5 16 6.5 9.5Z"/><path d="M6.8 3.6H2.2Q1.5 11.5 8.5 13.8M22.2 3.6H26.8Q27.5 11.5 20.5 13.8" fill="none" stroke="#3b82f6" stroke-width="2.8"/></svg>
<div class="t" style="left:2522.0px;top:2140.1px;font-size:21.80px;line-height:21.80px;color:#4b5563;transform:scaleX(0.8518);transform-origin:0 0;">+3% win</div>
<svg class="b" style="left:2613.3px;top:2144.5px;width:15.0px;height:15.0px;overflow:visible" viewBox="0 0 28.5 28.5" preserveAspectRatio="none"><circle cx="14.25" cy="14.25" r="14.25" fill="#3b82f6"/><path d="M13.6 6.5V14.6L18.5 18.2" fill="none" stroke="#f8fafc" stroke-width="2.6" stroke-linecap="round"/></svg>
<div class="t" style="left:2638.6px;top:2140.1px;font-size:21.80px;line-height:21.80px;color:#4b5563;transform:scaleX(0.8250);transform-origin:0 0;">1-2 days</div></body></html>
